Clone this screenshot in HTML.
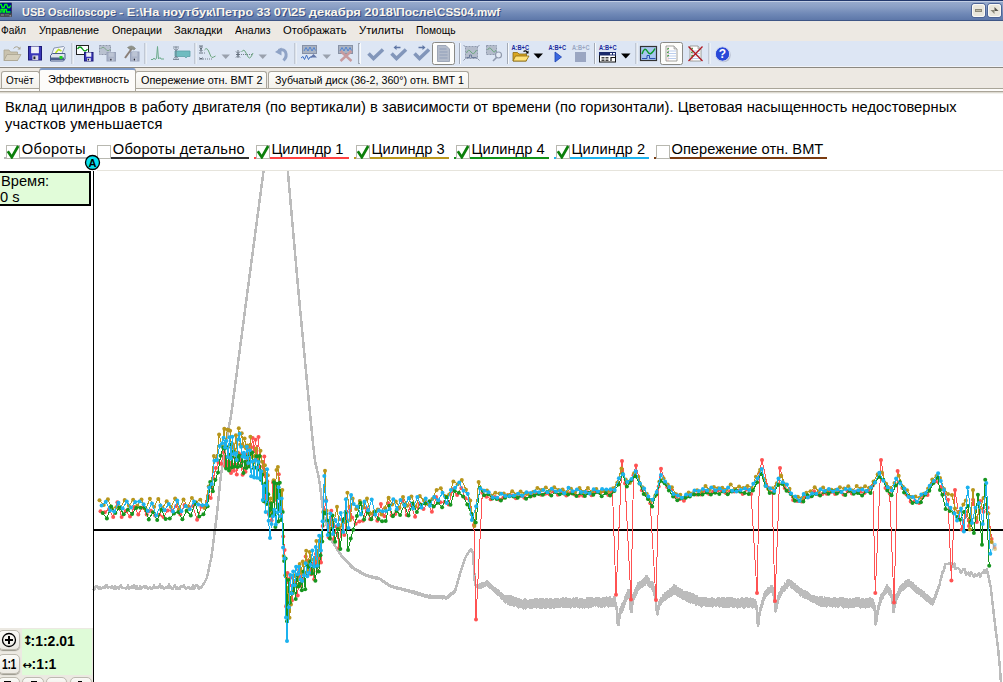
<!DOCTYPE html>
<html lang="ru"><head><meta charset="utf-8"><title>USB Oscilloscope</title>
<style>
html,body{margin:0;padding:0}
body{width:1003px;height:682px;overflow:hidden;position:relative;background:#fff;font-family:'Liberation Sans',sans-serif}
.abs{position:absolute}
.t{position:absolute;white-space:pre;transform-origin:0 0;line-height:1;z-index:5}
#title{left:0;top:0;width:1003px;height:21px;background:linear-gradient(#22386c 0,#22386c 1px,#c2cee4 1px,#c2cee4 2px,#97aacc 2px,#8a9fc5 7px,#6f88b6 14px,#5f79aa 19.5px,#415888 20px,#3d5484 21px)}
#menu{left:0;top:21px;width:1003px;height:20px;background:#ede9e3}

#tabs{left:0;top:68px;width:1003px;height:26px;background:#ede9e3}
.tab{position:absolute;top:3px;height:17px;background:linear-gradient(#fdfdfb,#f3f1eb);border:1px solid #a9a59b;border-bottom:none;border-radius:3px 3px 0 0;box-sizing:border-box}
.tab.sel{top:0px;height:23px;background:#fdfcfa;border-top:2px solid #7f9bc8;z-index:2}
#content{left:0;top:92px;width:1003px;height:590px}
.lbl{position:absolute;white-space:pre;font-size:14.67px;line-height:17px;color:#000}
.cb{position:absolute;width:12px;height:12px;border:1px solid #b8b8b0;background:#fff;box-sizing:content-box}
.ul{position:absolute;height:2px}
.chart{position:absolute;left:0;top:170px}
.btn{position:absolute;background:linear-gradient(#fafaf7,#eceae3);border:1px solid #bdbab0;border-radius:5px;box-shadow:0 1px 1px #9a978c;box-sizing:border-box}
</style></head><body>
<div id="title" class="abs">
<svg class="abs" style="left:0;top:2px" width="13" height="16" viewBox="0 2 13 16"><rect x="0" y="2.5" width="12" height="14.5" rx="0.8" fill="#4a4a50"/><rect x="0" y="3" width="11.3" height="10.3" fill="#000c90"/><path d="M0 4.500h1.200l1 3h1.800l1-3h1.800l1 3h1.800l1-2" fill="none" stroke="#00ff10" stroke-width="1.300"/><path d="M0 12h1v-2.500h2v2.500h1.500v-2.500h2v2.500h4" fill="none" stroke="#00ff10" stroke-width="1.300"/><path d="M1 15h3M5.500 14.800h1M7.500 14.800h1" stroke="#9a9aa0" stroke-width="0.900"/><rect x="9.500" y="15" width="1.500" height="1.500" fill="#8a8a90"/></svg>
<div class="abs" style="left:972px;top:4px;width:13px;height:13px;border-radius:3px;background:#e9e6dc;box-shadow:0 0 0 1px #4c6396,inset 0 0 0 1px #fbfaf6"><div class="abs" style="left:3px;top:5px;width:7px;height:3px;background:#bcb8a8;border:1px solid #8d8a7a;box-sizing:border-box"></div></div>
<div class="abs" style="left:988px;top:4px;width:13px;height:13px;border-radius:3px;background:#e9e6dc;box-shadow:0 0 0 1px #4c6396,inset 0 0 0 1px #fbfaf6"><svg class="abs" style="left:0;top:0" width="13" height="13"><path d="M6.5 3v4h4z" fill="#55524a"/><path d="M6.5 10v-4h-4z" fill="#8a8778"/></svg></div>
</div>
<div id="menu" class="abs"></div>
<svg id="tool" class="abs" width="1003" height="27" viewBox="0 41 1003 27" style="left:0;top:41px">
<rect x="0" y="41" width="1003" height="25" fill="#dde6f4"/>
<rect x="0" y="66" width="1003" height="1" fill="#eff2f8"/>
<rect x="0" y="67" width="1003" height="1" fill="#8b8880"/>
<rect x="71.5" y="43" width="1" height="21" fill="#a3aab6"/><rect x="72.5" y="43" width="1" height="21" fill="#f8fafc"/>
<rect x="144.5" y="43" width="1" height="21" fill="#a3aab6"/><rect x="145.5" y="43" width="1" height="21" fill="#f8fafc"/>
<rect x="194.5" y="43" width="1" height="21" fill="#a3aab6"/><rect x="195.5" y="43" width="1" height="21" fill="#f8fafc"/>
<rect x="294.5" y="43" width="1" height="21" fill="#a3aab6"/><rect x="295.5" y="43" width="1" height="21" fill="#f8fafc"/>
<rect x="459" y="43" width="1" height="21" fill="#a3aab6"/><rect x="460" y="43" width="1" height="21" fill="#f8fafc"/>
<rect x="507" y="43" width="1" height="21" fill="#a3aab6"/><rect x="508" y="43" width="1" height="21" fill="#f8fafc"/>
<rect x="594" y="43" width="1" height="21" fill="#a3aab6"/><rect x="595" y="43" width="1" height="21" fill="#f8fafc"/>
<rect x="635.5" y="43" width="1" height="21" fill="#a3aab6"/><rect x="636.5" y="43" width="1" height="21" fill="#f8fafc"/>
<rect x="708.5" y="43" width="1" height="21" fill="#a3aab6"/><rect x="709.5" y="43" width="1" height="21" fill="#f8fafc"/>
<rect x="358" y="43" width="1" height="21" fill="#a3aab6"/><rect x="359" y="43" width="1" height="1" fill="#a3aab6"/><rect x="359" y="63" width="1" height="1" fill="#a3aab6"/><rect x="360" y="43" width="1" height="21" fill="#f8fafc"/>
<g fill="#c9c2ae" stroke="#a9a390" stroke-width="0.8"><path d="M4 50h5l1.5 2h7v8.500h-13.500z"/><path d="M4 60.500l3-6h14l-3.500 6z" fill="#d5cfbd"/></g><path d="M13.500 48.500q3-3.500 6 0" fill="none" stroke="#a9a390" stroke-width="1"/><path d="M20.500 46.500v3h-3z" fill="#a9a390"/>
<rect x="28.5" y="46.5" width="13" height="13.5" fill="#3a37b8" stroke="#1c1a78" stroke-width="1"/>
<rect x="31.1" y="46.5" width="7.8" height="6.75" fill="#eef0f8"/>
<rect x="32.4" y="55.41" width="5.8500000000000005" height="4.590000000000001" fill="#d8d8e4"/>
<rect x="33.44" y="56.49" width="1.95" height="2.7" fill="#202030"/>
<path d="M54 48l9.500-1.500l1 1l-3 7h-10z" fill="#f4f6fa" stroke="#6f7f9f" stroke-width="0.8"/><path d="M55.500 53l3-3.500l3 1.500" fill="none" stroke="#b8e020" stroke-width="1.5"/>
<path d="M50.500 55.500l2-2h12.500v5.500l-1.500 2h-13z" fill="#dfe4ee" stroke="#4a5f8c" stroke-width="1"/><rect x="51" y="57.500" width="13" height="2.500" fill="#4a5f8c"/><rect x="59.500" y="56" width="3" height="3" fill="#22d022"/>
<rect x="76.500" y="45.500" width="12" height="9" fill="#fcfdff" stroke="#222" stroke-width="1"/><path d="M77.500 49q2.500-4 5 0t5 0" fill="none" stroke="#0a9a1a" stroke-width="1.4"/>
<rect x="84.5" y="52.5" width="8.5" height="8.5" fill="#3a37b8" stroke="#1c1a78" stroke-width="1"/>
<rect x="86.2" y="52.5" width="5.1" height="4.25" fill="#eef0f8"/>
<rect x="87.05" y="58.11" width="3.825" height="2.89" fill="#d8d8e4"/>
<rect x="87.73" y="58.79" width="1.275" height="1.7000000000000002" fill="#202030"/>
<rect x="99.500" y="45.500" width="11" height="9" fill="#b9c1d0" stroke="#8e97ab" stroke-width="1" stroke-dasharray="2 1"/><path d="M100.500 49q2.500-3.500 5 0t5 0" fill="none" stroke="#7da58a" stroke-width="1"/>
<rect x="107" y="52.5" width="8.5" height="8.5" fill="#aab3c8" stroke="#98a2ba" stroke-width="1"/>
<rect x="108.7" y="52.5" width="5.1" height="4.25" fill="#bcc4d4"/>
<rect x="109.55" y="58.11" width="3.825" height="2.89" fill="#bcc4d4"/>
<rect x="110.23" y="58.79" width="1.275" height="1.7000000000000002" fill="#202030"/>
<rect x="130.5" y="52" width="8.5" height="9" fill="#aab3c8" stroke="#98a2ba" stroke-width="1"/>
<rect x="132.2" y="52" width="5.1" height="4.5" fill="#bcc4d4"/>
<rect x="133.05" y="57.94" width="3.825" height="3.06" fill="#bcc4d4"/>
<rect x="133.73" y="58.66" width="1.275" height="1.8" fill="#202030"/>
<path d="M125 58l6.500-9" stroke="#8a7f78" stroke-width="2"/><path d="M127.500 47.500q4.500-3.500 8 1l-1.500 1.500q-2-1.500-4-0.500z" fill="#8f9188" stroke="#7b7d76" stroke-width="0.6"/>
<path d="M151 59.500h2l1-1.500l1 1.500l1.500-1l1 -12l1 12.500l1.500-1.500l1 1.500h3" fill="none" stroke="#6aaa8a" stroke-width="1"/>
<path d="M175 51h15v5.500h-3l-1 1.500l-1-1.500h-10z" fill="#6fbcc0" stroke="#5a9fa6" stroke-width="0.8"/><path d="M176 46.500v13M173.500 48.500l2.500 2l2.500-2M173.500 58.500l2.500-2l2.500 2M173 47h6M173 59.500h6" fill="none" stroke="#6a7686" stroke-width="0.8"/>
<path d="M201 46v6M199.500 47.500l1.500 1.500l1.500-1.500M199.500 51l1.500-1.500l1.500 1.500M199 46h4M199 53h4M199 59h4M199.500 57.500l1.500 1.500l1.500-1.500" fill="none" stroke="#5b6675" stroke-width="0.9"/><path d="M204 53h2M203 59h9" stroke="#5b6675" stroke-width="0.8" stroke-dasharray="1 1"/><path d="M204.500 50q2.500-3.500 4.500 2t3 5.500t3.500-1.500" fill="none" stroke="#6aa57e" stroke-width="1"/>
<path d="M221.500 54.500h8.500l-4.250 4.500z" fill="#9aa1ad"/>
<path d="M238 50v8M236 51.500l2 2l2-2M236 57.500l2-2l2 2M236 54.500h4" fill="none" stroke="#5b6675" stroke-width="0.9"/><path d="M241 54.500h12" stroke="#5b6675" stroke-width="0.8" stroke-dasharray="1 1"/><path d="M241.500 52q2.500-4 4.500 1t3.500 5t3.500-5" fill="none" stroke="#6aa57e" stroke-width="1"/>
<path d="M258.500 54.500h8.500l-4.250 4.500z" fill="#9aa1ad"/>
<path d="M283.500 60.500q4-4 2-8.500q-2-3.500-7-1.500" fill="none" stroke="#8fa3c6" stroke-width="3"/><path d="M275 52l6.500-4.500v8z" fill="#8fa3c6"/>
<rect x="302.500" y="45.500" width="14" height="8" fill="#a9b2c2" stroke="#8892a6" stroke-width="1"/><path d="M304 51l2-3.500l2 3.500l2-4l2 4l2-3.500l1.500 3" fill="none" stroke="#4a7fd0" stroke-width="0.9"/><path d="M301 58l2-1.500l1.500 3l2-4.500l2 4.500l1.500-2.500h2" fill="none" stroke="#3f6fc4" stroke-width="1"/><path d="M310 57.500l3.500-3.500l3.500 3.500z" fill="#6276a8"/>
<path d="M322.500 54.500h8.500l-4.250 4.500z" fill="#9aa1ad"/>
<rect x="338.500" y="45.500" width="14" height="8" fill="#a9b2c2" stroke="#8892a6" stroke-width="1"/><path d="M340 51l2-3.500l2 3.500l2-4l2 4l2-3.500l1.500 3" fill="none" stroke="#4a7fd0" stroke-width="0.9"/><path d="M340.500 51l11 10M351.500 51l-11 10" stroke="#c79a9e" stroke-width="2.4"/>
<path d="M368.5 53.500l5 5l9.500-9" fill="none" stroke="#8296ba" stroke-width="3.6" stroke-linejoin="miter"/>
<path d="M391.5 53.500l5 5l9.500-9" fill="none" stroke="#8296ba" stroke-width="3.6" stroke-linejoin="miter"/>
<path d="M393.500 47.500l3-2.500v1.700h4v1.600h-4v1.700z" fill="#5f76a4"/>
<path d="M414.5 53.500l5 5l9.500-9" fill="none" stroke="#8296ba" stroke-width="3.6" stroke-linejoin="miter"/>
<path d="M425.500 47.500l-3-2.500v1.700h-4v1.600h4v1.700z" fill="#5f76a4"/>
<rect x="432.500" y="42.500" width="22" height="22" rx="2" fill="#fdfdfb" stroke="#8a8a86" stroke-width="1"/>
<path d="M437.500 45.500h8.500l3.500 3.500v12.500h-12z" fill="#b4bccb" stroke="#8f99ad" stroke-width="0.8"/><path d="M439.500 49h7M439.500 52h8M439.500 55h8M439.500 58h8" stroke="#8d9bb8" stroke-width="0.9"/>
<rect x="465.500" y="46.500" width="12" height="12" fill="#b4bccb" stroke="#8f99ad" stroke-width="1" stroke-dasharray="2 1"/><path d="M466.500 53q2-5 4.500-1t5.500-2" fill="none" stroke="#6aa57e" stroke-width="1"/><path d="M466.500 57.500h3v-2.500h2v2.500h5" fill="none" stroke="#6b7c9c" stroke-width="1"/><path d="M463.500 45l2 2M479.500 45l-2 2M463.500 60.500l2-2M479.500 60.500l-2-2" stroke="#8f99ad" stroke-width="1"/>
<rect x="486.500" y="45.500" width="10" height="9" fill="#b4bccb" stroke="#8f99ad" stroke-width="1" stroke-dasharray="2 1"/><path d="M487.500 50q2-4 4.500 0t4 0" fill="none" stroke="#6aa57e" stroke-width="1"/><circle cx="498.500" cy="55" r="3" fill="#e6ecf6" stroke="#8f99ad" stroke-width="1.2"/><path d="M496.500 57.500l-3.500 3.500" stroke="#8f99ad" stroke-width="1.6"/>
<text x="511.5" y="49.800" font-family="Liberation Sans, sans-serif" font-weight="bold" font-size="7.500" textLength="17.500" lengthAdjust="spacingAndGlyphs" fill="#1a2a9c">A:B+C</text>
<text x="548.5" y="49.800" font-family="Liberation Sans, sans-serif" font-weight="bold" font-size="7.500" textLength="17.500" lengthAdjust="spacingAndGlyphs" fill="#1a2a9c">A:B+C</text>
<text x="572" y="49.800" font-family="Liberation Sans, sans-serif" font-weight="bold" font-size="7.500" textLength="17.500" lengthAdjust="spacingAndGlyphs" fill="#9aa6c2">A:B+C</text>
<text x="599" y="49.800" font-family="Liberation Sans, sans-serif" font-weight="bold" font-size="7.500" textLength="17.500" lengthAdjust="spacingAndGlyphs" fill="#1a2a9c">A:B+C</text>
<path d="M513 52.500h4.500l1.500 1.500h7.500v7h-13.500z" fill="#d9a520" stroke="#8a6a10" stroke-width="0.8"/><path d="M513 61l2.500-5h13.500l-3 5z" fill="#ffe27a" stroke="#8a6a10" stroke-width="0.8"/><path d="M523.500 51.500q2.500-1.500 4 1" fill="none" stroke="#000" stroke-width="1.2"/><path d="M528.500 50.500v3h-3z" fill="#000"/>
<path d="M533.500 53.500h9.500l-4.750 5z" fill="#000"/>
<path d="M555 52l6.500 5l-6.500 5z" fill="#3a68e0" stroke="#1a3fb0" stroke-width="0.8"/>
<rect x="575" y="52" width="11" height="10" fill="#9aa6c2"/>
<rect x="599.500" y="52.500" width="16" height="9.500" fill="#fff" stroke="#111" stroke-width="1"/><rect x="599" y="52" width="17" height="3.500" fill="#1a2a6c"/><rect x="601.500" y="57" width="3" height="1.500" fill="#444"/><rect x="601.500" y="59.500" width="3" height="1.500" fill="#444"/><rect x="605.500" y="57" width="3" height="1.500" fill="#444"/><rect x="605.500" y="59.500" width="3" height="1.500" fill="#444"/><path d="M611 61v-3.500h4" fill="none" stroke="#111" stroke-width="1.2"/><rect x="610" y="53" width="2" height="1.500" fill="#fff"/><rect x="613" y="53" width="2" height="1.500" fill="#fff"/>
<path d="M621 53.500h9.500l-4.750 5z" fill="#000"/>
<rect x="640.500" y="46.500" width="16" height="14" fill="#a8c6f0" stroke="#333" stroke-width="1.2"/><path d="M642 54q2.500-8 5.500-2.500t7.500-3" fill="none" stroke="#0a9a2a" stroke-width="1.5"/><path d="M642 58.500h5v-3h2.500v3h6" fill="none" stroke="#2850b0" stroke-width="1"/>
<rect x="660.500" y="42.500" width="22" height="22" rx="2" fill="#fdfdfb" stroke="#8a8a86" stroke-width="1"/>
<path d="M666 46h8l3 3v12h-11z" fill="#fff" stroke="#8a8a86" stroke-width="0.8"/><path d="M674 46v3h3" fill="#d8d8d8" stroke="#8a8a86" stroke-width="0.6"/>
<path d="M668 51h8M668 53.5h8M668 56h8M668 58.5h8" stroke="#a8c0e8" stroke-width="0.8"/>
<path d="M668 47v14" stroke="#e8a0a0" stroke-width="0.6"/>
<path d="M667.5 49.5l1-1.500M667.5 53l1-1.500M667.5 56.5l1-1.500" stroke="#0a8a1a" stroke-width="1.2"/>
<path d="M690 46h8l3 3v12h-11z" fill="#fff" stroke="#8a8a86" stroke-width="0.8"/><path d="M698 46v3h3" fill="#d8d8d8" stroke="#8a8a86" stroke-width="0.6"/>
<path d="M692 51h8M692 53.5h8M692 56h8M692 58.5h8" stroke="#a8c0e8" stroke-width="0.8"/>
<path d="M692 47v14" stroke="#e8a0a0" stroke-width="0.6"/>
<path d="M691.5 49.5l1-1.500M691.5 53l1-1.500M691.5 56.5l1-1.500" stroke="#0a8a1a" stroke-width="1.2"/>
<path d="M688.500 46.500l14 14.500M702.500 46.500l-14 14.500" stroke="#b01822" stroke-width="1.3"/>
<circle cx="723.500" cy="55" r="7.300" fill="#b8c0d0"/><circle cx="722.500" cy="54" r="7.200" fill="#2848d8" stroke="#d8e0f4" stroke-width="1"/><text x="722.500" y="58.300" text-anchor="middle" font-family="Liberation Sans, sans-serif" font-weight="bold" font-size="12" fill="#fff">?</text>
</svg>
<div id="tabs" class="abs">
<div class="abs" style="left:0;top:20px;width:1003px;height:1px;background:#a9a599"></div><div class="abs" style="left:0;top:21px;width:1003px;height:2px;background:#fdfcfa"></div><div class="abs" style="left:0;top:23px;width:1003px;height:1px;background:#aaa599"></div><div class="abs" style="left:0;top:24px;width:1003px;height:1px;background:#dddad1"></div><div class="abs" style="left:0;top:25px;width:1003px;height:1px;background:#f3f2ee"></div>
<div class="tab" style="left:1px;width:39px"></div>
<div class="tab" style="left:135px;width:132px"></div>
<div class="tab" style="left:268px;width:201px"></div>
<div class="tab sel" style="left:39px;width:97px"></div>
</div>
<div id="content" class="abs">
<div class="lbl" style="left:5px;top:7px;letter-spacing:0.044px">Вклад цилиндров в работу двигателя (по вертикали) в зависимости от времени (по горизонтали). Цветовая насыщенность недостоверных</div><div class="lbl" style="left:5px;top:24px;letter-spacing:0.17px">участков уменьшается</div>
<div class="ul" style="left:4px;top:65px;width:85px;background:#b4b4b4"></div>
<div class="cb" style="left:6px;top:53px"></div>
<svg class="abs" style="left:6px;top:52px" width="15" height="15"><path d="M1.800 7.300L5.800 13.200L12.200 2" fill="none" stroke="#0b7f0b" stroke-width="2.700"/></svg>
<div class="lbl" style="left:21.8px;top:49px;letter-spacing:0.42px">Обороты</div>
<div class="ul" style="left:111px;top:65px;width:138px;background:#303030"></div>
<div class="cb" style="left:97px;top:53px"></div>
<div class="lbl" style="left:112.8px;top:49px;letter-spacing:0.22px">Обороты детально</div>
<div class="ul" style="left:254px;top:65px;width:95px;background:#ff4040"></div>
<div class="cb" style="left:256px;top:53px"></div>
<svg class="abs" style="left:256px;top:52px" width="15" height="15"><path d="M1.800 7.300L5.800 13.200L12.200 2" fill="none" stroke="#0b7f0b" stroke-width="2.700"/></svg>
<div class="lbl" style="left:271.5px;top:49px;letter-spacing:-0.1px">Цилиндр 1</div>
<div class="ul" style="left:354px;top:65px;width:95px;background:#b8961c"></div>
<div class="cb" style="left:356px;top:53px"></div>
<svg class="abs" style="left:356px;top:52px" width="15" height="15"><path d="M1.800 7.300L5.800 13.200L12.200 2" fill="none" stroke="#0b7f0b" stroke-width="2.700"/></svg>
<div class="lbl" style="left:371.5px;top:49px;letter-spacing:0.05px">Цилиндр 3</div>
<div class="ul" style="left:454px;top:65px;width:95px;background:#109018"></div>
<div class="cb" style="left:456px;top:53px"></div>
<svg class="abs" style="left:456px;top:52px" width="15" height="15"><path d="M1.800 7.300L5.800 13.200L12.200 2" fill="none" stroke="#0b7f0b" stroke-width="2.700"/></svg>
<div class="lbl" style="left:471.5px;top:49px;letter-spacing:0.05px">Цилиндр 4</div>
<div class="ul" style="left:554px;top:65px;width:95px;background:#1cb2ee"></div>
<div class="cb" style="left:556px;top:53px"></div>
<svg class="abs" style="left:556px;top:52px" width="15" height="15"><path d="M1.800 7.300L5.800 13.200L12.200 2" fill="none" stroke="#0b7f0b" stroke-width="2.700"/></svg>
<div class="lbl" style="left:571.5px;top:49px;letter-spacing:0.1px">Цилиндр 2</div>
<div class="ul" style="left:654px;top:65px;width:173px;background:#7a3b10"></div>
<div class="cb" style="left:656px;top:53px"></div>
<div class="lbl" style="left:671.5px;top:49px;letter-spacing:0px">Опережение отн. ВМТ</div>
</div>
<svg class="chart" width="1003" height="512" viewBox="0 170 1003 512">
<polyline shape-rendering="crispEdges" fill="none" stroke="#bcbcbc" stroke-width="2.5" stroke-linejoin="round" points="93.0,590.4 94.0,589.3 95.0,588.8 96.0,586.0 97.0,586.3 98.0,587.6 99.0,588.6 100.0,587.1 101.0,588.8 102.0,587.9 103.0,587.3 104.0,587.7 105.0,587.5 106.0,584.8 107.0,585.7 108.0,587.8 109.0,587.3 110.0,587.2 111.0,587.9 112.0,585.7 113.0,587.7 114.0,588.4 115.0,585.7 116.0,588.7 117.0,587.7 118.0,587.4 119.0,588.5 120.0,586.1 121.0,585.4 122.0,588.2 123.0,587.7 124.0,588.2 125.0,588.0 126.0,588.8 127.0,588.3 128.0,585.2 129.0,588.9 130.0,587.7 131.0,588.3 132.0,586.2 133.0,587.5 134.0,585.0 135.0,587.0 136.0,588.7 137.0,586.2 138.0,588.7 139.0,588.7 140.0,586.4 141.0,588.7 142.0,587.5 143.0,587.1 144.0,586.1 145.0,587.6 146.0,586.3 147.0,588.2 148.0,588.4 149.0,588.2 150.0,587.3 151.0,588.5 152.0,588.6 153.0,587.9 154.0,585.5 155.0,587.7 156.0,587.4 157.0,587.8 158.0,587.4 159.0,586.6 160.0,584.5 161.0,587.5 162.0,586.6 163.0,587.4 164.0,588.9 165.0,588.0 166.0,587.6 167.0,587.0 168.0,587.5 169.0,584.2 170.0,587.4 171.0,587.2 172.0,588.9 173.0,588.4 174.0,586.5 175.0,584.9 176.0,588.5 177.0,587.1 178.0,588.9 179.0,588.6 180.0,588.5 181.0,586.0 182.0,587.2 183.0,586.9 184.0,585.3 185.0,588.0 186.0,588.9 187.0,587.8 188.0,587.1 189.0,587.2 190.0,588.7 191.0,588.0 192.0,588.6 193.0,585.4 194.0,588.5 195.0,588.0 196.0,584.9 197.0,584.8 198.0,587.9 199.0,588.8 200.0,587.5 201.0,588.0 202.5,585.6 204.0,583.2 205.5,580.7 207.0,577.4 208.5,570.4 210.0,563.4 211.5,556.4 213.0,545.5 214.5,533.6 216.0,521.7 217.5,508.7 219.0,493.8 220.5,479.0 222.0,467.9 223.5,458.7 225.0,449.5 226.5,440.3 228.0,431.1 229.5,423.8 231.0,416.2 232.5,404.9 234.0,393.5 235.5,382.2 237.0,370.9 238.5,359.5 240.0,348.2 241.5,336.9 243.0,325.5 244.5,314.2 246.0,302.8 247.5,291.5 249.0,280.2 250.5,269.0 252.0,257.7 253.5,246.5 255.0,235.2 256.5,224.0 258.0,212.7 259.5,201.5 261.0,190.2 262.5,179.0 264.0,167.7 265.5,160.0 267.0,160.0 268.5,160.0 270.0,160.0 271.5,160.0 273.0,160.0 274.5,160.0 276.0,160.0 277.5,160.0 279.0,160.0 280.5,160.0 282.0,160.0 283.5,160.0 285.0,160.0 286.5,160.0 288.0,173.4 289.5,190.4 291.0,207.4 292.5,224.3 294.0,241.3 295.5,258.3 297.0,275.3 298.5,292.1 300.0,308.0 301.5,323.8 303.0,339.7 304.5,355.5 306.0,371.4 307.5,387.2 309.0,403.1 310.5,418.9 312.0,433.5 313.5,448.0 315.0,461.3 316.5,467.6 318.0,473.8 319.5,482.0 321.0,493.9 322.5,505.8 324.0,516.0 325.5,521.5 327.0,527.0 328.5,531.2 330.0,535.0 331.0,537.7 331.5,540.1 332.0,540.7 332.5,542.2 333.0,542.1 333.5,543.7 334.0,543.8 334.5,545.3 335.0,545.4 335.5,546.7 336.0,546.7 336.5,548.4 337.0,548.4 337.5,550.0 338.0,549.9 338.5,551.6 339.0,551.4 339.5,552.9 340.0,553.1 340.5,554.5 341.0,554.6 341.5,556.1 342.0,556.2 342.5,557.4 343.0,557.3 343.5,558.6 344.0,558.2 344.5,559.5 345.0,559.2 345.5,560.7 346.0,560.3 346.5,561.7 347.0,561.3 347.5,562.7 348.0,562.4 348.5,563.6 349.0,563.4 349.5,564.7 350.0,564.6 350.5,565.9 351.0,565.6 351.5,566.8 352.0,566.5 352.5,567.9 353.0,567.6 353.5,568.7 354.0,568.2 354.5,569.4 355.0,568.9 355.5,569.9 356.0,569.4 356.5,570.4 357.0,569.9 357.5,571.0 358.0,570.5 358.5,571.7 359.0,571.0 359.5,572.2 360.0,571.6 360.5,572.8 361.0,572.3 361.5,573.4 362.0,572.9 362.5,574.0 363.0,573.4 363.5,574.7 364.0,574.0 364.5,575.2 365.0,574.5 365.5,575.5 366.0,574.8 366.5,575.9 367.0,575.0 367.5,576.0 368.0,575.5 368.5,576.3 369.0,575.8 369.5,576.5 370.0,576.0 370.5,576.9 371.0,576.1 371.5,577.3 372.0,576.5 372.5,577.5 373.0,576.7 373.5,577.6 374.0,576.9 374.5,578.1 375.0,577.3 375.5,578.4 376.0,577.5 376.5,578.5 377.0,577.6 377.5,578.9 378.0,578.1 378.5,579.0 379.0,578.3 379.5,579.2 380.0,578.7 380.5,579.7 381.0,579.2 381.5,580.3 382.0,580.0 382.5,581.2 383.0,580.8 383.5,581.8 384.0,581.3 384.5,582.6 385.0,582.2 385.5,583.4 386.0,582.7 386.5,584.1 387.0,583.6 387.5,584.6 388.0,584.3 388.5,585.5 389.0,584.9 389.5,586.0 390.0,585.6 390.5,586.7 391.0,585.7 391.5,586.8 392.0,586.2 392.5,587.2 393.0,586.3 393.5,587.4 394.0,586.7 394.5,587.5 395.0,586.8 395.5,587.9 396.0,587.3 396.5,588.3 397.0,587.4 397.5,588.5 398.0,587.8 398.5,588.8 399.0,588.0 399.5,589.1 400.0,588.2 400.5,589.2 401.0,588.4 401.5,589.7 402.0,588.7 402.5,589.7 403.0,588.9 403.5,590.0 404.0,589.3 404.5,590.3 405.0,589.5 405.5,590.6 406.0,589.7 406.5,590.9 407.0,589.7 407.5,591.2 408.0,590.0 408.5,591.4 409.0,590.4 409.5,591.6 410.0,590.7 410.5,591.9 411.0,590.7 411.5,592.5 412.0,591.3 412.5,592.8 413.0,591.2 413.5,592.9 414.0,591.5 414.5,593.3 415.0,592.0 415.5,593.8 416.0,592.3 416.5,593.9 417.0,592.5 417.5,594.5 418.0,592.9 418.5,594.7 419.0,593.0 419.5,594.9 420.0,593.5 420.5,595.0 421.0,593.9 421.5,595.2 422.0,594.2 422.5,595.8 423.0,594.4 423.5,595.8 424.0,594.8 424.5,596.4 425.0,594.7 425.5,596.6 426.0,595.3 426.5,596.7 427.0,595.6 427.5,597.1 428.0,595.9 428.5,597.3 429.0,595.9 429.5,597.6 430.0,595.6 430.5,597.4 431.0,596.1 431.5,597.7 432.0,596.1 432.5,597.5 433.0,596.3 433.5,597.5 434.0,596.1 434.5,597.7 435.0,596.3 435.5,597.7 436.0,596.5 436.5,597.7 437.0,596.5 437.5,597.8 438.0,596.6 438.5,597.7 439.0,596.5 439.5,597.8 440.0,596.5 440.5,598.1 441.0,596.4 441.5,598.2 442.0,596.5 442.5,598.4 443.0,596.8 443.5,598.1 444.0,596.5 444.5,598.1 445.0,596.7 445.5,598.4 446.0,597.1 446.5,598.6 447.0,596.8 447.5,598.1 448.0,596.0 448.5,597.3 449.0,595.5 449.5,596.4 450.0,594.4 450.5,595.7 451.0,593.4 451.5,594.8 452.0,592.7 452.5,594.0 453.0,591.8 453.5,593.1 454.0,591.2 454.5,591.9 455.0,590.4 455.5,589.9 456.0,587.1 456.5,586.5 457.0,583.6 457.5,582.8 458.0,580.3 458.5,579.3 459.0,576.9 459.5,575.7 460.0,573.4 460.5,572.4 461.0,570.2 461.5,569.4 462.0,567.3 462.5,566.4 463.0,564.4 463.5,563.5 464.0,561.6 464.5,560.6 465.0,558.6 465.5,557.7 466.0,555.7 466.5,555.7 467.0,554.3 467.5,554.2 468.0,552.9 468.5,552.8 469.0,551.4 469.5,551.4 470.0,550.1 470.5,549.9 471.0,548.8 471.5,550.3 472.0,550.7 472.5,552.3 473.0,552.7 473.5,561.2 474.0,568.8 474.5,577.3 475.0,584.7 475.5,585.6 476.0,585.2 476.5,586.3 477.0,585.4 477.5,587.3 478.0,585.6 478.5,588.0 479.0,584.9 479.5,587.7 480.0,584.3 480.5,588.0 481.0,584.8 481.5,587.1 482.0,583.5 482.5,587.2 483.0,583.4 483.5,586.0 484.0,583.1 484.5,586.2 485.0,582.7 485.5,585.4 486.0,582.3 486.5,584.9 487.0,580.9 487.5,584.7 488.0,581.9 488.5,586.0 489.0,582.7 489.5,587.1 490.0,584.3 490.5,588.2 491.0,584.8 491.5,588.1 492.0,586.2 492.5,589.5 493.0,586.6 493.5,590.2 494.0,587.8 494.5,591.1 495.0,588.5 495.5,592.6 496.0,589.7 496.5,593.4 497.0,589.6 497.5,593.6 498.0,590.4 498.5,595.2 499.0,591.3 499.5,595.6 500.0,592.8 500.5,596.7 501.0,592.8 501.5,598.0 502.0,594.3 502.5,598.8 503.0,595.2 503.5,599.3 504.0,596.2 504.5,601.6 505.0,596.4 505.5,602.3 506.0,596.7 506.5,601.6 507.0,596.4 507.5,602.0 508.0,596.9 508.5,604.1 509.0,596.0 509.5,604.3 510.0,596.7 510.5,605.0 511.0,596.3 511.5,604.5 512.0,597.2 512.5,603.8 513.0,597.5 513.5,605.0 514.0,597.8 514.5,605.8 515.0,599.3 515.5,604.8 516.0,598.1 516.5,605.4 517.0,599.5 517.5,606.2 518.0,600.3 518.5,607.5 519.0,599.1 519.5,606.7 520.0,600.2 520.5,607.0 521.0,600.4 521.5,607.2 522.0,601.3 522.5,606.6 523.0,601.1 523.5,608.3 524.0,600.5 524.5,606.7 525.0,599.5 525.5,608.5 526.0,600.5 526.5,606.5 527.0,601.1 527.5,606.4 528.0,600.7 528.5,606.3 529.0,600.9 529.5,606.7 530.0,600.1 530.5,608.2 531.0,599.7 531.5,607.0 532.0,600.5 532.5,607.3 533.0,600.5 533.5,606.8 534.0,601.2 534.5,606.7 535.0,599.1 535.5,606.3 536.0,600.2 536.5,607.4 537.0,599.3 537.5,606.5 538.0,600.7 538.5,606.5 539.0,600.3 539.5,607.0 540.0,599.0 540.5,607.9 541.0,599.2 541.5,605.9 542.0,601.1 542.5,607.5 543.0,599.1 543.5,606.9 544.0,599.8 544.5,605.8 545.0,600.2 545.5,608.0 546.0,599.2 546.5,607.8 547.0,598.8 547.5,606.3 548.0,600.8 548.5,606.1 549.0,599.8 549.5,607.3 550.0,598.8 550.5,607.4 551.0,599.5 551.5,607.5 552.0,599.9 552.5,606.9 553.0,600.9 553.5,607.5 554.0,600.4 554.5,607.8 555.0,599.4 555.5,606.3 556.0,600.6 556.5,606.2 557.0,599.4 557.5,607.2 558.0,600.6 558.5,605.7 559.0,599.6 559.5,606.9 560.0,599.9 560.5,606.0 561.0,599.4 561.5,605.5 562.0,600.1 562.5,606.5 563.0,598.5 563.5,607.0 564.0,598.6 564.5,606.5 565.0,600.1 565.5,606.0 566.0,598.4 566.5,607.0 567.0,599.9 567.5,605.4 568.0,599.5 568.5,606.9 569.0,599.6 569.5,605.9 570.0,599.0 570.5,607.5 571.0,600.0 571.5,605.4 572.0,599.7 572.5,606.2 573.0,598.9 573.5,605.7 574.0,598.6 574.5,607.0 575.0,599.3 575.5,605.7 576.0,598.2 576.5,605.9 577.0,598.5 577.5,605.7 578.0,599.9 578.5,606.9 579.0,599.7 579.5,607.4 580.0,599.2 580.5,605.5 581.0,599.8 581.5,606.1 582.0,598.7 582.5,607.3 583.0,600.0 583.5,606.0 584.0,599.8 584.5,607.3 585.0,599.9 585.5,605.1 586.0,600.1 586.5,605.9 587.0,598.1 587.5,607.1 588.0,598.5 588.5,607.3 589.0,598.0 589.5,605.7 590.0,599.7 590.5,607.1 591.0,598.4 591.5,604.9 592.0,598.5 592.5,605.8 593.0,599.2 593.5,605.6 594.0,599.7 594.5,604.8 595.0,599.4 595.5,605.6 596.0,597.7 596.5,605.1 597.0,597.7 597.5,605.2 598.0,599.1 598.5,606.7 599.0,598.0 599.5,605.7 600.0,599.8 600.5,605.8 601.0,599.0 601.5,606.9 602.0,599.4 602.5,605.5 603.0,597.7 603.5,604.7 604.0,598.9 604.5,606.6 605.0,598.0 605.5,604.7 606.0,599.7 606.5,604.7 607.0,597.6 607.5,605.2 608.0,598.0 608.5,606.7 609.0,598.9 609.5,605.2 610.0,597.4 610.5,606.0 611.0,599.1 611.5,606.2 612.0,598.9 612.5,605.1 613.0,599.6 613.5,606.2 614.0,597.4 614.5,605.6 615.0,598.1 615.5,605.2 616.0,602.7 616.5,608.1 617.0,610.6 617.5,622.6 618.0,625.1 618.5,625.1 619.0,617.3 619.5,618.1 620.0,608.8 620.5,613.0 621.0,606.8 621.5,612.2 622.0,604.5 622.5,610.4 623.0,603.0 623.5,607.2 624.0,600.8 624.5,604.5 625.0,597.2 625.5,601.2 626.0,595.6 626.5,599.8 627.0,592.7 627.5,595.7 628.0,590.4 628.5,593.9 629.0,590.2 629.5,598.1 630.0,592.5 630.5,608.7 631.0,611.6 631.5,612.0 632.0,603.9 632.5,604.8 633.0,594.8 633.5,599.6 634.0,593.5 634.5,597.3 635.0,590.6 635.5,595.6 636.0,588.1 636.5,593.7 637.0,586.1 637.5,590.2 638.0,583.6 638.5,589.0 639.0,583.2 639.5,588.2 640.0,582.0 640.5,587.0 641.0,582.0 641.5,586.2 642.0,581.3 642.5,586.5 643.0,579.7 643.5,584.6 644.0,579.1 644.5,584.9 645.0,578.0 645.5,582.7 646.0,576.6 646.5,582.5 647.0,576.4 647.5,582.7 648.0,578.5 648.5,585.1 649.0,579.0 649.5,586.5 650.0,581.6 650.5,586.5 651.0,582.6 651.5,587.4 652.0,582.2 652.5,589.3 653.0,583.5 653.5,591.3 654.0,587.2 654.5,595.0 655.0,591.9 655.5,599.2 656.0,598.5 656.5,610.0 657.0,611.1 657.5,614.4 658.0,606.8 658.5,609.0 659.0,601.9 659.5,605.5 660.0,600.4 660.5,604.8 661.0,598.3 661.5,602.7 662.0,598.0 662.5,601.6 663.0,595.5 663.5,600.2 664.0,595.3 664.5,599.4 665.0,593.4 665.5,599.3 666.0,593.9 666.5,597.6 667.0,592.3 667.5,597.7 668.0,590.8 668.5,596.0 669.0,590.9 669.5,596.5 670.0,589.4 670.5,594.9 671.0,588.7 671.5,595.6 672.0,587.7 672.5,593.9 673.0,586.7 673.5,592.7 674.0,584.7 674.5,593.9 675.0,586.5 675.5,592.7 676.0,586.2 676.5,593.3 677.0,588.5 677.5,595.5 678.0,588.1 678.5,595.9 679.0,588.8 679.5,596.6 680.0,589.2 680.5,595.6 681.0,590.9 681.5,597.1 682.0,590.0 682.5,598.5 683.0,591.9 683.5,598.5 684.0,591.8 684.5,598.7 685.0,592.8 685.5,598.6 686.0,592.4 686.5,600.6 687.0,593.7 687.5,600.0 688.0,592.6 688.5,601.5 689.0,594.4 689.5,600.0 690.0,593.1 690.5,602.4 691.0,594.6 691.5,600.7 692.0,594.0 692.5,601.9 693.0,594.5 693.5,602.9 694.0,595.1 694.5,602.3 695.0,595.7 695.5,602.9 696.0,597.0 696.5,604.8 697.0,596.4 697.5,603.7 698.0,598.3 698.5,604.6 699.0,598.0 699.5,605.0 700.0,599.4 700.5,604.9 701.0,598.0 701.5,606.5 702.0,599.6 702.5,605.7 703.0,597.9 703.5,604.5 704.0,597.8 704.5,604.7 705.0,598.3 705.5,605.7 706.0,598.3 706.5,605.2 707.0,598.8 707.5,605.8 708.0,598.8 708.5,606.0 709.0,598.8 709.5,605.5 710.0,599.8 710.5,606.0 711.0,598.7 711.5,605.1 712.0,598.1 712.5,606.4 713.0,598.8 713.5,605.0 714.0,598.8 714.5,604.9 715.0,599.6 715.5,605.6 716.0,599.7 716.5,605.7 717.0,598.8 717.5,604.8 718.0,598.5 718.5,604.9 719.0,598.3 719.5,606.5 720.0,598.8 720.5,604.9 721.0,598.8 721.5,605.6 722.0,597.8 722.5,605.1 723.0,598.0 723.5,607.1 724.0,598.3 724.5,606.7 725.0,599.6 725.5,607.1 726.0,598.9 726.5,607.1 727.0,598.0 727.5,605.3 728.0,598.3 728.5,607.1 729.0,600.0 729.5,605.7 730.0,598.4 730.5,605.3 731.0,598.1 731.5,605.6 732.0,598.3 732.5,605.3 733.0,599.0 733.5,607.2 734.0,599.7 734.5,605.6 735.0,599.1 735.5,605.8 736.0,600.2 736.5,605.5 737.0,599.9 737.5,607.3 738.0,598.7 738.5,607.2 739.0,599.9 739.5,607.0 740.0,600.1 740.5,606.4 741.0,598.8 741.5,606.0 742.0,598.3 742.5,606.5 743.0,599.0 743.5,607.3 744.0,600.2 744.5,607.6 745.0,598.9 745.5,606.2 746.0,598.5 746.5,605.9 747.0,598.1 747.5,606.6 748.0,599.6 748.5,607.1 749.0,599.4 749.5,605.7 750.0,598.7 750.5,605.4 751.0,598.6 751.5,605.9 752.0,599.0 752.5,607.7 753.0,599.2 753.5,607.0 754.0,599.8 754.5,605.4 755.0,600.5 755.5,606.4 756.0,602.1 756.5,608.2 757.0,611.1 757.5,622.4 758.0,625.5 758.5,624.4 759.0,616.2 759.5,615.7 760.0,608.5 760.5,610.4 761.0,605.1 761.5,607.3 762.0,601.6 762.5,604.5 763.0,597.9 763.5,600.7 764.0,594.6 764.5,598.0 765.0,592.2 765.5,596.7 766.0,591.1 766.5,594.5 767.0,590.4 767.5,594.3 768.0,588.2 768.5,593.6 769.0,588.0 769.5,591.9 770.0,587.8 770.5,591.6 771.0,585.9 771.5,590.2 772.0,586.5 772.5,592.7 773.0,588.5 773.5,595.6 774.0,592.0 774.5,602.1 775.0,602.3 775.5,611.5 776.0,607.0 776.5,608.5 777.0,601.9 777.5,603.7 778.0,596.3 778.5,599.5 779.0,592.8 779.5,596.9 780.0,592.0 780.5,595.6 781.0,589.5 781.5,593.7 782.0,587.0 782.5,591.4 783.0,586.7 783.5,590.4 784.0,586.0 784.5,590.3 785.0,583.6 785.5,588.8 786.0,583.8 786.5,587.9 787.0,581.4 787.5,586.1 788.0,580.3 788.5,585.0 789.0,580.0 789.5,584.3 790.0,580.8 790.5,585.0 791.0,581.5 791.5,587.1 792.0,581.8 792.5,588.1 793.0,582.6 793.5,588.0 794.0,583.8 794.5,589.2 795.0,584.2 795.5,590.2 796.0,586.0 796.5,591.3 797.0,585.7 797.5,591.4 798.0,586.7 798.5,592.0 799.0,588.6 799.5,593.2 800.0,588.6 800.5,595.3 801.0,589.3 801.5,594.7 802.0,589.6 802.5,595.3 803.0,591.2 803.5,596.8 804.0,591.1 804.5,596.9 805.0,591.5 805.5,597.9 806.0,592.4 806.5,598.2 807.0,592.5 807.5,598.7 808.0,593.4 808.5,599.0 809.0,593.7 809.5,598.9 810.0,594.8 810.5,599.9 811.0,595.6 811.5,600.9 812.0,596.0 812.5,600.0 813.0,596.5 813.5,602.1 814.0,596.5 814.5,601.3 815.0,597.5 815.5,601.7 816.0,596.7 816.5,603.5 817.0,597.1 817.5,604.1 818.0,598.5 818.5,604.1 819.0,597.9 819.5,604.8 820.0,597.0 820.5,605.3 821.0,598.8 821.5,605.5 822.0,596.9 822.5,605.9 823.0,599.0 823.5,604.4 824.0,599.1 824.5,604.1 825.0,597.6 825.5,606.1 826.0,598.2 826.5,606.3 827.0,598.4 827.5,605.2 828.0,599.8 828.5,605.0 829.0,598.4 829.5,605.3 830.0,599.5 830.5,605.8 831.0,600.2 831.5,605.4 832.0,599.6 832.5,606.5 833.0,599.4 833.5,605.6 834.0,598.0 834.5,606.1 835.0,598.3 835.5,606.3 836.0,600.2 836.5,605.9 837.0,599.2 837.5,606.7 838.0,599.5 838.5,606.6 839.0,599.0 839.5,605.5 840.0,598.3 840.5,605.2 841.0,598.4 841.5,605.4 842.0,600.3 842.5,605.5 843.0,598.5 843.5,607.3 844.0,600.3 844.5,606.2 845.0,599.2 845.5,606.9 846.0,599.9 846.5,606.2 847.0,599.5 847.5,607.0 848.0,599.8 848.5,607.3 849.0,599.7 849.5,605.6 850.0,598.7 850.5,606.3 851.0,600.1 851.5,606.6 852.0,600.2 852.5,607.0 853.0,598.8 853.5,607.0 854.0,598.9 854.5,606.0 855.0,599.5 855.5,606.1 856.0,598.3 856.5,605.4 857.0,598.3 857.5,605.3 858.0,600.0 858.5,605.8 859.0,598.3 859.5,606.4 860.0,599.6 860.5,607.3 861.0,599.9 861.5,606.3 862.0,599.2 862.5,607.1 863.0,598.7 863.5,606.8 864.0,599.7 864.5,606.1 865.0,600.2 865.5,607.3 866.0,599.0 866.5,607.1 867.0,600.1 867.5,606.4 868.0,598.7 868.5,606.7 869.0,600.3 869.5,606.5 870.0,598.5 870.5,605.9 871.0,600.1 871.5,606.1 872.0,598.9 872.5,607.4 873.0,600.2 873.5,606.4 874.0,602.7 874.5,608.0 875.0,612.6 875.5,624.6 876.0,622.3 876.5,621.7 877.0,613.3 877.5,614.5 878.0,606.4 878.5,609.3 879.0,603.0 879.5,605.2 880.0,598.2 880.5,602.5 881.0,595.2 881.5,599.5 882.0,594.4 882.5,598.1 883.0,592.9 883.5,595.8 884.0,590.8 884.5,593.8 885.0,589.1 885.5,593.4 886.0,587.0 886.5,591.2 887.0,585.4 887.5,591.0 888.0,587.5 888.5,592.6 889.0,588.4 889.5,594.1 890.0,588.9 890.5,595.0 891.0,590.8 891.5,596.8 892.0,595.5 892.5,603.5 893.0,602.5 893.5,612.0 894.0,604.0 894.5,607.3 895.0,599.4 895.5,602.9 896.0,595.4 896.5,599.2 897.0,593.7 897.5,597.4 898.0,591.9 898.5,594.9 899.0,588.7 899.5,593.2 900.0,587.1 900.5,591.2 901.0,586.5 901.5,590.6 902.0,585.2 902.5,589.6 903.0,584.1 903.5,589.4 904.0,584.0 904.5,588.0 905.0,582.0 905.5,586.6 906.0,581.5 906.5,586.6 907.0,581.3 907.5,585.0 908.0,580.1 908.5,585.3 909.0,579.7 909.5,585.7 910.0,581.9 910.5,586.6 911.0,582.0 911.5,587.7 912.0,582.9 912.5,588.4 913.0,583.2 913.5,589.0 914.0,584.7 914.5,590.5 915.0,585.9 915.5,590.9 916.0,586.4 916.5,591.9 917.0,587.7 917.5,593.1 918.0,588.2 918.5,592.4 919.0,589.1 919.5,593.8 920.0,590.4 920.5,594.7 921.0,590.5 921.5,595.9 922.0,591.5 922.5,596.0 923.0,592.5 923.5,597.6 924.0,592.1 924.5,598.1 925.0,594.1 925.5,599.3 926.0,594.6 926.5,599.2 927.0,595.8 927.5,600.9 928.0,595.6 928.5,601.5 929.0,596.9 929.5,602.2 930.0,598.1 930.5,603.5 931.0,598.9 931.5,603.7 932.0,599.1 932.5,604.5 933.0,600.6 933.5,602.7 934.0,597.9 934.5,599.7 935.0,595.0 935.5,597.0 936.0,592.4 936.5,594.1 937.0,590.3 937.5,591.2 938.0,587.6 938.5,588.3 939.0,585.2 939.5,585.6 940.0,582.0 941.3,577.5 942.6,571.9 943.9,570.4 945.2,564.4 946.5,564.0 947.8,564.1 949.1,563.6 950.4,563.2 951.7,564.2 953.0,566.5 954.3,563.7 955.6,569.0 956.9,568.3 958.2,568.2 959.5,569.6 960.8,572.8 962.1,571.0 963.4,568.9 964.7,569.3 966.0,574.5 967.3,573.2 968.6,572.6 969.9,575.8 971.2,572.3 972.5,574.5 973.8,576.5 975.1,574.0 976.4,576.2 977.7,575.4 979.0,572.7 980.3,576.9 981.6,573.1 982.9,573.1 984.2,570.5 985.5,572.9 986.8,569.2 988.1,574.0 989.4,581.0 990.7,586.9 992.2,600.1 993.7,613.3 995.2,626.1 996.7,637.9 998.2,649.7 999.7,665.5 1001.2,685.9"/>
<rect x="93" y="529" width="910" height="2" fill="#000"/>
<g stroke="#ff5252" fill="#ff5252">
<polyline shape-rendering="crispEdges" fill="none" stroke-width="1" points="100.5,511.2 104.8,512.2 109.0,509.2 113.2,517.1 117.4,502.3 121.6,516.9 125.8,511.0 130.0,516.5 134.2,506.9 138.3,514.5 142.5,507.5 146.7,514.4 150.9,510.7 155.1,515.4 159.3,514.8 163.5,517.1 167.7,510.4 171.9,510.7 176.1,505.9 180.3,514.6 184.5,505.0 188.7,506.5 192.9,506.0 197.1,519.8 201.3,506.7 205.5,506.3 208.1,495.5 210.7,497.9 213.3,478.3 215.9,468.0 218.5,462.5 221.1,463.8 223.7,452.3 225.2,466.2 226.6,457.1 228.1,466.1 229.5,454.8 231.0,473.1 232.4,457.3 233.9,470.8 235.3,453.1 236.8,474.6 238.2,452.9 239.7,454.3 241.1,464.8 242.6,474.8 244.0,468.5 245.5,471.7 246.9,454.7 248.4,465.6 249.8,447.7 251.3,447.3 252.7,438.1 254.2,451.2 255.6,439.8 257.1,459.8 258.5,437.0 260.0,466.5 261.4,471.2 262.9,472.5 264.3,456.5 265.8,502.2 267.2,481.2 268.7,513.7 270.1,502.3 271.6,520.2 273.0,482.5 274.5,500.1 275.9,488.4 277.4,504.1 278.8,474.2 280.3,492.9 281.7,509.4 283.2,536.5 284.6,550.1 286.1,606.6 287.5,573.1 289.0,598.2 290.4,577.8 291.9,600.6 293.3,585.7 294.8,582.3 296.2,584.7 297.7,595.5 299.1,569.8 300.6,585.8 302.3,573.0 304.0,580.4 305.7,556.4 307.4,560.8 309.1,561.0 310.8,574.2 312.5,564.1 314.2,579.2 315.9,554.0 317.6,571.4 319.3,558.0 321.0,562.4 322.7,526.1 324.4,510.0 326.1,500.2 328.7,537.3 331.3,510.8 333.9,539.0 336.5,526.4 339.1,548.1 341.7,519.6 344.3,535.0 346.9,511.9 349.5,506.8 352.1,517.4 355.7,523.7 359.3,521.6 362.9,520.7 366.5,508.1 370.1,519.2 373.7,512.8 377.3,520.8 380.9,503.9 384.5,516.3 388.1,502.9 391.7,515.2 395.3,513.9 398.9,508.5 402.5,500.8 406.7,515.0 410.9,505.1 415.1,516.7 419.3,503.5 423.5,508.9 427.7,502.8 431.9,511.7 436.1,497.0 440.3,502.2 444.5,502.1 448.7,504.4 452.9,489.3 457.1,495.1 461.3,487.9 465.5,498.3 469.7,500.4 473.9,525.0 476.0,619.5 482.3,492.8 486.5,496.7 490.7,499.2 494.9,496.9 499.1,499.5 503.3,497.7 507.5,495.3 511.7,495.5 515.9,498.3 520.1,495.9 524.3,497.7 528.5,493.4 532.7,495.5 536.9,493.0 541.1,494.7 545.3,493.8 549.5,494.2 553.7,491.5 557.9,494.8 562.1,492.6 566.3,495.5 570.5,492.9 574.7,494.4 578.9,495.7 583.1,495.7 587.3,492.3 591.5,495.2 595.7,492.3 599.9,493.1 604.1,491.3 608.3,495.0 612.5,491.4 616.0,594.7 622.0,461.0 625.1,483.6 631.0,599.6 633.5,475.2 636.0,465.6 641.9,490.3 646.1,495.0 650.3,503.3 656.0,600.0 658.7,486.4 661.0,468.7 667.1,487.1 671.3,489.5 675.5,496.7 679.7,499.2 683.9,500.8 688.1,495.7 692.3,494.2 696.5,494.6 700.7,494.6 704.9,490.8 709.1,494.0 713.3,491.4 717.5,490.5 721.7,491.2 725.9,493.0 730.1,491.3 734.3,491.6 738.5,490.8 742.7,493.9 746.9,489.6 751.1,493.9 757.0,593.0 759.5,472.7 762.0,460.0 767.9,487.5 772.1,492.6 775.0,601.0 780.0,468.0 784.7,487.9 788.9,491.3 793.1,500.1 797.3,501.1 801.5,501.4 805.7,497.0 809.9,496.5 814.1,491.3 818.3,494.4 822.5,494.0 826.7,493.7 830.9,492.0 835.1,494.1 839.3,491.4 843.5,494.6 847.7,491.6 851.9,493.5 856.1,491.6 860.3,491.7 864.5,493.1 868.7,489.9 872.9,485.4 875.3,593.0 881.0,460.0 885.5,488.0 889.7,493.6 894.0,602.6 897.6,471.0 902.3,487.9 906.5,494.6 910.7,501.5 914.9,501.0 919.1,503.1 923.3,495.9 927.5,495.0 931.7,484.1 935.9,481.3 941.0,487.0 944.5,494.0 948.0,499.7 951.4,580.6 955.0,490.0 958.4,512.0 961.8,529.5 965.4,512.0 969.0,526.0 973.0,499.7 976.8,522.0 980.3,501.0 983.5,511.8 987.6,507.7 991.6,539.0"/>
<g stroke="none"><circle cx="100.5" cy="511.2" r="2"/><circle cx="104.8" cy="512.2" r="2"/><circle cx="109.0" cy="509.2" r="2"/><circle cx="113.2" cy="517.1" r="2"/><circle cx="117.4" cy="502.3" r="2"/><circle cx="121.6" cy="516.9" r="2"/><circle cx="125.8" cy="511.0" r="2"/><circle cx="130.0" cy="516.5" r="2"/><circle cx="134.2" cy="506.9" r="2"/><circle cx="138.3" cy="514.5" r="2"/><circle cx="142.5" cy="507.5" r="2"/><circle cx="146.7" cy="514.4" r="2"/><circle cx="150.9" cy="510.7" r="2"/><circle cx="155.1" cy="515.4" r="2"/><circle cx="159.3" cy="514.8" r="2"/><circle cx="163.5" cy="517.1" r="2"/><circle cx="167.7" cy="510.4" r="2"/><circle cx="171.9" cy="510.7" r="2"/><circle cx="176.1" cy="505.9" r="2"/><circle cx="180.3" cy="514.6" r="2"/><circle cx="184.5" cy="505.0" r="2"/><circle cx="188.7" cy="506.5" r="2"/><circle cx="192.9" cy="506.0" r="2"/><circle cx="197.1" cy="519.8" r="2"/><circle cx="201.3" cy="506.7" r="2"/><circle cx="205.5" cy="506.3" r="2"/><circle cx="208.1" cy="495.5" r="2"/><circle cx="210.7" cy="497.9" r="2"/><circle cx="213.3" cy="478.3" r="2"/><circle cx="215.9" cy="468.0" r="2"/><circle cx="218.5" cy="462.5" r="2"/><circle cx="221.1" cy="463.8" r="2"/><circle cx="223.7" cy="452.3" r="2"/><circle cx="225.2" cy="466.2" r="2"/><circle cx="226.6" cy="457.1" r="2"/><circle cx="228.1" cy="466.1" r="2"/><circle cx="229.5" cy="454.8" r="2"/><circle cx="231.0" cy="473.1" r="2"/><circle cx="232.4" cy="457.3" r="2"/><circle cx="233.9" cy="470.8" r="2"/><circle cx="235.3" cy="453.1" r="2"/><circle cx="236.8" cy="474.6" r="2"/><circle cx="238.2" cy="452.9" r="2"/><circle cx="239.7" cy="454.3" r="2"/><circle cx="241.1" cy="464.8" r="2"/><circle cx="242.6" cy="474.8" r="2"/><circle cx="244.0" cy="468.5" r="2"/><circle cx="245.5" cy="471.7" r="2"/><circle cx="246.9" cy="454.7" r="2"/><circle cx="248.4" cy="465.6" r="2"/><circle cx="249.8" cy="447.7" r="2"/><circle cx="251.3" cy="447.3" r="2"/><circle cx="252.7" cy="438.1" r="2"/><circle cx="254.2" cy="451.2" r="2"/><circle cx="255.6" cy="439.8" r="2"/><circle cx="257.1" cy="459.8" r="2"/><circle cx="258.5" cy="437.0" r="2"/><circle cx="260.0" cy="466.5" r="2"/><circle cx="261.4" cy="471.2" r="2"/><circle cx="262.9" cy="472.5" r="2"/><circle cx="264.3" cy="456.5" r="2"/><circle cx="265.8" cy="502.2" r="2"/><circle cx="267.2" cy="481.2" r="2"/><circle cx="268.7" cy="513.7" r="2"/><circle cx="270.1" cy="502.3" r="2"/><circle cx="271.6" cy="520.2" r="2"/><circle cx="273.0" cy="482.5" r="2"/><circle cx="274.5" cy="500.1" r="2"/><circle cx="275.9" cy="488.4" r="2"/><circle cx="277.4" cy="504.1" r="2"/><circle cx="278.8" cy="474.2" r="2"/><circle cx="280.3" cy="492.9" r="2"/><circle cx="281.7" cy="509.4" r="2"/><circle cx="283.2" cy="536.5" r="2"/><circle cx="284.6" cy="550.1" r="2"/><circle cx="286.1" cy="606.6" r="2"/><circle cx="287.5" cy="573.1" r="2"/><circle cx="289.0" cy="598.2" r="2"/><circle cx="290.4" cy="577.8" r="2"/><circle cx="291.9" cy="600.6" r="2"/><circle cx="293.3" cy="585.7" r="2"/><circle cx="294.8" cy="582.3" r="2"/><circle cx="296.2" cy="584.7" r="2"/><circle cx="297.7" cy="595.5" r="2"/><circle cx="299.1" cy="569.8" r="2"/><circle cx="300.6" cy="585.8" r="2"/><circle cx="302.3" cy="573.0" r="2"/><circle cx="304.0" cy="580.4" r="2"/><circle cx="305.7" cy="556.4" r="2"/><circle cx="307.4" cy="560.8" r="2"/><circle cx="309.1" cy="561.0" r="2"/><circle cx="310.8" cy="574.2" r="2"/><circle cx="312.5" cy="564.1" r="2"/><circle cx="314.2" cy="579.2" r="2"/><circle cx="315.9" cy="554.0" r="2"/><circle cx="317.6" cy="571.4" r="2"/><circle cx="319.3" cy="558.0" r="2"/><circle cx="321.0" cy="562.4" r="2"/><circle cx="322.7" cy="526.1" r="2"/><circle cx="324.4" cy="510.0" r="2"/><circle cx="326.1" cy="500.2" r="2"/><circle cx="328.7" cy="537.3" r="2"/><circle cx="331.3" cy="510.8" r="2"/><circle cx="333.9" cy="539.0" r="2"/><circle cx="336.5" cy="526.4" r="2"/><circle cx="339.1" cy="548.1" r="2"/><circle cx="341.7" cy="519.6" r="2"/><circle cx="344.3" cy="535.0" r="2"/><circle cx="346.9" cy="511.9" r="2"/><circle cx="349.5" cy="506.8" r="2"/><circle cx="352.1" cy="517.4" r="2"/><circle cx="355.7" cy="523.7" r="2"/><circle cx="359.3" cy="521.6" r="2"/><circle cx="362.9" cy="520.7" r="2"/><circle cx="366.5" cy="508.1" r="2"/><circle cx="370.1" cy="519.2" r="2"/><circle cx="373.7" cy="512.8" r="2"/><circle cx="377.3" cy="520.8" r="2"/><circle cx="380.9" cy="503.9" r="2"/><circle cx="384.5" cy="516.3" r="2"/><circle cx="388.1" cy="502.9" r="2"/><circle cx="391.7" cy="515.2" r="2"/><circle cx="395.3" cy="513.9" r="2"/><circle cx="398.9" cy="508.5" r="2"/><circle cx="402.5" cy="500.8" r="2"/><circle cx="406.7" cy="515.0" r="2"/><circle cx="410.9" cy="505.1" r="2"/><circle cx="415.1" cy="516.7" r="2"/><circle cx="419.3" cy="503.5" r="2"/><circle cx="423.5" cy="508.9" r="2"/><circle cx="427.7" cy="502.8" r="2"/><circle cx="431.9" cy="511.7" r="2"/><circle cx="436.1" cy="497.0" r="2"/><circle cx="440.3" cy="502.2" r="2"/><circle cx="444.5" cy="502.1" r="2"/><circle cx="448.7" cy="504.4" r="2"/><circle cx="452.9" cy="489.3" r="2"/><circle cx="457.1" cy="495.1" r="2"/><circle cx="461.3" cy="487.9" r="2"/><circle cx="465.5" cy="498.3" r="2"/><circle cx="469.7" cy="500.4" r="2"/><circle cx="473.9" cy="525.0" r="2"/><circle cx="476.0" cy="619.5" r="2"/><circle cx="482.3" cy="492.8" r="2"/><circle cx="486.5" cy="496.7" r="2"/><circle cx="490.7" cy="499.2" r="2"/><circle cx="494.9" cy="496.9" r="2"/><circle cx="499.1" cy="499.5" r="2"/><circle cx="503.3" cy="497.7" r="2"/><circle cx="507.5" cy="495.3" r="2"/><circle cx="511.7" cy="495.5" r="2"/><circle cx="515.9" cy="498.3" r="2"/><circle cx="520.1" cy="495.9" r="2"/><circle cx="524.3" cy="497.7" r="2"/><circle cx="528.5" cy="493.4" r="2"/><circle cx="532.7" cy="495.5" r="2"/><circle cx="536.9" cy="493.0" r="2"/><circle cx="541.1" cy="494.7" r="2"/><circle cx="545.3" cy="493.8" r="2"/><circle cx="549.5" cy="494.2" r="2"/><circle cx="553.7" cy="491.5" r="2"/><circle cx="557.9" cy="494.8" r="2"/><circle cx="562.1" cy="492.6" r="2"/><circle cx="566.3" cy="495.5" r="2"/><circle cx="570.5" cy="492.9" r="2"/><circle cx="574.7" cy="494.4" r="2"/><circle cx="578.9" cy="495.7" r="2"/><circle cx="583.1" cy="495.7" r="2"/><circle cx="587.3" cy="492.3" r="2"/><circle cx="591.5" cy="495.2" r="2"/><circle cx="595.7" cy="492.3" r="2"/><circle cx="599.9" cy="493.1" r="2"/><circle cx="604.1" cy="491.3" r="2"/><circle cx="608.3" cy="495.0" r="2"/><circle cx="612.5" cy="491.4" r="2"/><circle cx="616.0" cy="594.7" r="2"/><circle cx="622.0" cy="461.0" r="2"/><circle cx="625.1" cy="483.6" r="2"/><circle cx="631.0" cy="599.6" r="2"/><circle cx="633.5" cy="475.2" r="2"/><circle cx="636.0" cy="465.6" r="2"/><circle cx="641.9" cy="490.3" r="2"/><circle cx="646.1" cy="495.0" r="2"/><circle cx="650.3" cy="503.3" r="2"/><circle cx="656.0" cy="600.0" r="2"/><circle cx="658.7" cy="486.4" r="2"/><circle cx="661.0" cy="468.7" r="2"/><circle cx="667.1" cy="487.1" r="2"/><circle cx="671.3" cy="489.5" r="2"/><circle cx="675.5" cy="496.7" r="2"/><circle cx="679.7" cy="499.2" r="2"/><circle cx="683.9" cy="500.8" r="2"/><circle cx="688.1" cy="495.7" r="2"/><circle cx="692.3" cy="494.2" r="2"/><circle cx="696.5" cy="494.6" r="2"/><circle cx="700.7" cy="494.6" r="2"/><circle cx="704.9" cy="490.8" r="2"/><circle cx="709.1" cy="494.0" r="2"/><circle cx="713.3" cy="491.4" r="2"/><circle cx="717.5" cy="490.5" r="2"/><circle cx="721.7" cy="491.2" r="2"/><circle cx="725.9" cy="493.0" r="2"/><circle cx="730.1" cy="491.3" r="2"/><circle cx="734.3" cy="491.6" r="2"/><circle cx="738.5" cy="490.8" r="2"/><circle cx="742.7" cy="493.9" r="2"/><circle cx="746.9" cy="489.6" r="2"/><circle cx="751.1" cy="493.9" r="2"/><circle cx="757.0" cy="593.0" r="2"/><circle cx="759.5" cy="472.7" r="2"/><circle cx="762.0" cy="460.0" r="2"/><circle cx="767.9" cy="487.5" r="2"/><circle cx="772.1" cy="492.6" r="2"/><circle cx="775.0" cy="601.0" r="2"/><circle cx="780.0" cy="468.0" r="2"/><circle cx="784.7" cy="487.9" r="2"/><circle cx="788.9" cy="491.3" r="2"/><circle cx="793.1" cy="500.1" r="2"/><circle cx="797.3" cy="501.1" r="2"/><circle cx="801.5" cy="501.4" r="2"/><circle cx="805.7" cy="497.0" r="2"/><circle cx="809.9" cy="496.5" r="2"/><circle cx="814.1" cy="491.3" r="2"/><circle cx="818.3" cy="494.4" r="2"/><circle cx="822.5" cy="494.0" r="2"/><circle cx="826.7" cy="493.7" r="2"/><circle cx="830.9" cy="492.0" r="2"/><circle cx="835.1" cy="494.1" r="2"/><circle cx="839.3" cy="491.4" r="2"/><circle cx="843.5" cy="494.6" r="2"/><circle cx="847.7" cy="491.6" r="2"/><circle cx="851.9" cy="493.5" r="2"/><circle cx="856.1" cy="491.6" r="2"/><circle cx="860.3" cy="491.7" r="2"/><circle cx="864.5" cy="493.1" r="2"/><circle cx="868.7" cy="489.9" r="2"/><circle cx="872.9" cy="485.4" r="2"/><circle cx="875.3" cy="593.0" r="2"/><circle cx="881.0" cy="460.0" r="2"/><circle cx="885.5" cy="488.0" r="2"/><circle cx="889.7" cy="493.6" r="2"/><circle cx="894.0" cy="602.6" r="2"/><circle cx="897.6" cy="471.0" r="2"/><circle cx="902.3" cy="487.9" r="2"/><circle cx="906.5" cy="494.6" r="2"/><circle cx="910.7" cy="501.5" r="2"/><circle cx="914.9" cy="501.0" r="2"/><circle cx="919.1" cy="503.1" r="2"/><circle cx="923.3" cy="495.9" r="2"/><circle cx="927.5" cy="495.0" r="2"/><circle cx="931.7" cy="484.1" r="2"/><circle cx="935.9" cy="481.3" r="2"/><circle cx="941.0" cy="487.0" r="2"/><circle cx="944.5" cy="494.0" r="2"/><circle cx="948.0" cy="499.7" r="2"/><circle cx="951.4" cy="580.6" r="2"/><circle cx="955.0" cy="490.0" r="2"/><circle cx="958.4" cy="512.0" r="2"/><circle cx="961.8" cy="529.5" r="2"/><circle cx="965.4" cy="512.0" r="2"/><circle cx="969.0" cy="526.0" r="2"/><circle cx="973.0" cy="499.7" r="2"/><circle cx="976.8" cy="522.0" r="2"/><circle cx="980.3" cy="501.0" r="2"/><circle cx="983.5" cy="511.8" r="2"/><circle cx="987.6" cy="507.7" r="2"/><circle cx="991.6" cy="539.0" r="2"/></g>
<g opacity="0.45">
<polyline fill="none" stroke-width="1" points="991.6,539.0 994.5,547.0"/>
<g stroke="none"><circle cx="994.5" cy="547.0" r="2"/></g>
</g>
</g>
<g stroke="#b8961c" fill="#b8961c">
<polyline shape-rendering="crispEdges" fill="none" stroke-width="1" points="99.5,500.3 103.7,504.9 107.9,499.2 112.1,508.8 116.3,507.2 120.5,508.3 124.7,500.1 128.9,505.7 133.1,499.8 137.3,505.7 141.5,499.5 145.7,509.2 149.9,498.8 154.1,506.7 158.3,499.0 162.5,507.9 166.7,501.3 170.9,507.1 175.1,498.5 179.3,509.3 183.5,499.6 187.7,506.8 191.9,497.9 196.1,502.2 200.3,499.7 204.5,508.1 208.7,486.5 211.3,485.3 213.9,456.1 216.5,459.4 219.1,434.4 221.7,444.9 224.3,428.8 225.7,446.1 227.2,429.8 228.6,429.9 230.1,430.8 231.5,447.6 233.0,444.3 234.4,449.6 235.9,435.2 237.3,452.5 238.8,428.2 240.2,444.4 241.7,433.2 243.1,446.3 244.6,438.6 246.0,448.2 247.5,445.5 248.9,461.8 250.4,436.8 251.8,456.9 253.3,462.5 254.7,456.0 256.2,448.5 257.6,468.4 259.1,457.1 260.5,450.7 262.0,461.8 263.4,471.6 264.9,465.3 266.3,500.5 267.8,475.2 269.2,511.2 270.7,498.5 272.1,511.8 273.6,480.3 275.0,497.9 276.5,470.1 277.9,467.0 279.4,498.1 280.8,497.9 282.3,490.1 283.7,556.1 285.2,575.3 286.6,605.0 288.1,587.7 289.5,617.8 291.0,604.5 292.4,592.1 293.9,575.3 295.3,576.2 296.8,586.6 298.2,585.1 299.7,564.0 301.1,572.9 302.8,561.6 304.5,573.0 306.2,550.7 307.9,571.1 309.6,551.9 311.3,559.4 313.0,572.4 314.7,559.8 316.4,540.9 318.1,563.4 319.8,541.8 321.5,536.4 323.2,512.1 325.0,470.7 326.6,510.7 329.2,528.0 331.8,522.5 334.4,520.4 337.0,506.8 339.6,527.8 342.2,524.9 344.8,522.0 347.4,492.7 350.0,519.9 352.6,498.6 356.2,508.9 359.8,500.9 363.4,507.6 367.0,498.6 370.6,513.7 374.2,511.6 377.8,509.5 381.4,514.4 385.0,508.1 388.6,497.8 392.2,504.6 395.8,501.4 399.4,507.4 403.0,496.9 407.2,505.8 411.4,496.4 415.6,506.5 419.8,496.1 424.0,500.6 428.2,504.3 432.4,498.9 436.6,490.0 440.8,488.3 445.0,496.2 449.2,494.6 453.4,481.5 457.6,484.2 461.8,480.0 466.0,489.7 470.2,500.6 474.4,526.1 478.6,482.0 482.8,490.6 487.0,490.5 491.2,495.5 495.4,492.8 499.6,493.4 503.8,493.5 508.0,495.2 512.2,491.3 516.4,494.6 520.6,491.6 524.8,493.7 529.0,494.6 533.2,492.1 537.4,487.9 541.6,490.0 545.8,487.4 550.0,490.6 554.2,487.3 558.4,490.1 562.6,489.5 566.8,491.9 571.0,488.7 575.2,491.9 579.5,488.1 583.7,491.9 587.9,487.9 592.1,492.0 596.3,489.0 600.5,491.9 604.7,491.1 608.9,490.9 613.1,488.3 617.3,482.8 621.5,468.4 625.7,479.6 629.9,482.9 634.1,473.3 638.3,476.8 642.5,487.3 646.7,493.8 650.9,501.1 655.1,495.9 659.3,481.7 663.5,478.3 667.7,484.4 671.9,487.3 676.1,494.2 680.3,494.7 684.5,497.5 688.7,492.6 692.9,493.3 697.1,490.2 701.3,491.3 705.5,485.9 709.7,489.9 713.9,487.0 718.1,488.2 722.3,487.7 726.5,489.8 730.7,484.4 734.9,488.9 739.1,486.4 743.3,488.1 747.5,486.1 751.7,487.7 755.9,476.7 760.1,469.8 764.3,479.1 768.5,489.3 772.7,488.3 776.9,483.2 781.1,475.5 785.3,484.5 789.5,488.7 793.7,497.6 797.9,496.7 802.1,498.0 806.3,492.7 810.5,491.3 814.7,487.3 818.9,491.6 823.1,487.5 827.3,490.6 831.5,489.8 835.7,489.9 839.9,487.3 844.1,488.6 848.3,486.3 852.5,490.4 856.7,486.1 860.9,488.6 865.1,486.2 869.3,487.7 873.5,481.6 877.7,474.2 881.9,472.5 886.1,483.7 890.3,488.1 894.5,483.0 898.7,475.8 902.9,486.7 907.1,490.2 911.3,496.9 915.5,496.5 919.7,497.8 923.9,493.8 928.1,488.6 932.3,479.5 936.5,475.9 940.0,478.0 944.0,489.0 948.0,494.0 952.0,495.0 955.0,508.5 958.5,512.6 963.4,504.5 965.8,500.5 969.8,529.5 973.0,490.0 976.3,518.0 980.0,509.0 983.5,498.0 988.4,513.4 991.6,542.0"/>
<g stroke="none"><circle cx="99.5" cy="500.3" r="2"/><circle cx="103.7" cy="504.9" r="2"/><circle cx="107.9" cy="499.2" r="2"/><circle cx="112.1" cy="508.8" r="2"/><circle cx="116.3" cy="507.2" r="2"/><circle cx="120.5" cy="508.3" r="2"/><circle cx="124.7" cy="500.1" r="2"/><circle cx="128.9" cy="505.7" r="2"/><circle cx="133.1" cy="499.8" r="2"/><circle cx="137.3" cy="505.7" r="2"/><circle cx="141.5" cy="499.5" r="2"/><circle cx="145.7" cy="509.2" r="2"/><circle cx="149.9" cy="498.8" r="2"/><circle cx="154.1" cy="506.7" r="2"/><circle cx="158.3" cy="499.0" r="2"/><circle cx="162.5" cy="507.9" r="2"/><circle cx="166.7" cy="501.3" r="2"/><circle cx="170.9" cy="507.1" r="2"/><circle cx="175.1" cy="498.5" r="2"/><circle cx="179.3" cy="509.3" r="2"/><circle cx="183.5" cy="499.6" r="2"/><circle cx="187.7" cy="506.8" r="2"/><circle cx="191.9" cy="497.9" r="2"/><circle cx="196.1" cy="502.2" r="2"/><circle cx="200.3" cy="499.7" r="2"/><circle cx="204.5" cy="508.1" r="2"/><circle cx="208.7" cy="486.5" r="2"/><circle cx="211.3" cy="485.3" r="2"/><circle cx="213.9" cy="456.1" r="2"/><circle cx="216.5" cy="459.4" r="2"/><circle cx="219.1" cy="434.4" r="2"/><circle cx="221.7" cy="444.9" r="2"/><circle cx="224.3" cy="428.8" r="2"/><circle cx="225.7" cy="446.1" r="2"/><circle cx="227.2" cy="429.8" r="2"/><circle cx="228.6" cy="429.9" r="2"/><circle cx="230.1" cy="430.8" r="2"/><circle cx="231.5" cy="447.6" r="2"/><circle cx="233.0" cy="444.3" r="2"/><circle cx="234.4" cy="449.6" r="2"/><circle cx="235.9" cy="435.2" r="2"/><circle cx="237.3" cy="452.5" r="2"/><circle cx="238.8" cy="428.2" r="2"/><circle cx="240.2" cy="444.4" r="2"/><circle cx="241.7" cy="433.2" r="2"/><circle cx="243.1" cy="446.3" r="2"/><circle cx="244.6" cy="438.6" r="2"/><circle cx="246.0" cy="448.2" r="2"/><circle cx="247.5" cy="445.5" r="2"/><circle cx="248.9" cy="461.8" r="2"/><circle cx="250.4" cy="436.8" r="2"/><circle cx="251.8" cy="456.9" r="2"/><circle cx="253.3" cy="462.5" r="2"/><circle cx="254.7" cy="456.0" r="2"/><circle cx="256.2" cy="448.5" r="2"/><circle cx="257.6" cy="468.4" r="2"/><circle cx="259.1" cy="457.1" r="2"/><circle cx="260.5" cy="450.7" r="2"/><circle cx="262.0" cy="461.8" r="2"/><circle cx="263.4" cy="471.6" r="2"/><circle cx="264.9" cy="465.3" r="2"/><circle cx="266.3" cy="500.5" r="2"/><circle cx="267.8" cy="475.2" r="2"/><circle cx="269.2" cy="511.2" r="2"/><circle cx="270.7" cy="498.5" r="2"/><circle cx="272.1" cy="511.8" r="2"/><circle cx="273.6" cy="480.3" r="2"/><circle cx="275.0" cy="497.9" r="2"/><circle cx="276.5" cy="470.1" r="2"/><circle cx="277.9" cy="467.0" r="2"/><circle cx="279.4" cy="498.1" r="2"/><circle cx="280.8" cy="497.9" r="2"/><circle cx="282.3" cy="490.1" r="2"/><circle cx="283.7" cy="556.1" r="2"/><circle cx="285.2" cy="575.3" r="2"/><circle cx="286.6" cy="605.0" r="2"/><circle cx="288.1" cy="587.7" r="2"/><circle cx="289.5" cy="617.8" r="2"/><circle cx="291.0" cy="604.5" r="2"/><circle cx="292.4" cy="592.1" r="2"/><circle cx="293.9" cy="575.3" r="2"/><circle cx="295.3" cy="576.2" r="2"/><circle cx="296.8" cy="586.6" r="2"/><circle cx="298.2" cy="585.1" r="2"/><circle cx="299.7" cy="564.0" r="2"/><circle cx="301.1" cy="572.9" r="2"/><circle cx="302.8" cy="561.6" r="2"/><circle cx="304.5" cy="573.0" r="2"/><circle cx="306.2" cy="550.7" r="2"/><circle cx="307.9" cy="571.1" r="2"/><circle cx="309.6" cy="551.9" r="2"/><circle cx="311.3" cy="559.4" r="2"/><circle cx="313.0" cy="572.4" r="2"/><circle cx="314.7" cy="559.8" r="2"/><circle cx="316.4" cy="540.9" r="2"/><circle cx="318.1" cy="563.4" r="2"/><circle cx="319.8" cy="541.8" r="2"/><circle cx="321.5" cy="536.4" r="2"/><circle cx="323.2" cy="512.1" r="2"/><circle cx="325.0" cy="470.7" r="2"/><circle cx="326.6" cy="510.7" r="2"/><circle cx="329.2" cy="528.0" r="2"/><circle cx="331.8" cy="522.5" r="2"/><circle cx="334.4" cy="520.4" r="2"/><circle cx="337.0" cy="506.8" r="2"/><circle cx="339.6" cy="527.8" r="2"/><circle cx="342.2" cy="524.9" r="2"/><circle cx="344.8" cy="522.0" r="2"/><circle cx="347.4" cy="492.7" r="2"/><circle cx="350.0" cy="519.9" r="2"/><circle cx="352.6" cy="498.6" r="2"/><circle cx="356.2" cy="508.9" r="2"/><circle cx="359.8" cy="500.9" r="2"/><circle cx="363.4" cy="507.6" r="2"/><circle cx="367.0" cy="498.6" r="2"/><circle cx="370.6" cy="513.7" r="2"/><circle cx="374.2" cy="511.6" r="2"/><circle cx="377.8" cy="509.5" r="2"/><circle cx="381.4" cy="514.4" r="2"/><circle cx="385.0" cy="508.1" r="2"/><circle cx="388.6" cy="497.8" r="2"/><circle cx="392.2" cy="504.6" r="2"/><circle cx="395.8" cy="501.4" r="2"/><circle cx="399.4" cy="507.4" r="2"/><circle cx="403.0" cy="496.9" r="2"/><circle cx="407.2" cy="505.8" r="2"/><circle cx="411.4" cy="496.4" r="2"/><circle cx="415.6" cy="506.5" r="2"/><circle cx="419.8" cy="496.1" r="2"/><circle cx="424.0" cy="500.6" r="2"/><circle cx="428.2" cy="504.3" r="2"/><circle cx="432.4" cy="498.9" r="2"/><circle cx="436.6" cy="490.0" r="2"/><circle cx="440.8" cy="488.3" r="2"/><circle cx="445.0" cy="496.2" r="2"/><circle cx="449.2" cy="494.6" r="2"/><circle cx="453.4" cy="481.5" r="2"/><circle cx="457.6" cy="484.2" r="2"/><circle cx="461.8" cy="480.0" r="2"/><circle cx="466.0" cy="489.7" r="2"/><circle cx="470.2" cy="500.6" r="2"/><circle cx="474.4" cy="526.1" r="2"/><circle cx="478.6" cy="482.0" r="2"/><circle cx="482.8" cy="490.6" r="2"/><circle cx="487.0" cy="490.5" r="2"/><circle cx="491.2" cy="495.5" r="2"/><circle cx="495.4" cy="492.8" r="2"/><circle cx="499.6" cy="493.4" r="2"/><circle cx="503.8" cy="493.5" r="2"/><circle cx="508.0" cy="495.2" r="2"/><circle cx="512.2" cy="491.3" r="2"/><circle cx="516.4" cy="494.6" r="2"/><circle cx="520.6" cy="491.6" r="2"/><circle cx="524.8" cy="493.7" r="2"/><circle cx="529.0" cy="494.6" r="2"/><circle cx="533.2" cy="492.1" r="2"/><circle cx="537.4" cy="487.9" r="2"/><circle cx="541.6" cy="490.0" r="2"/><circle cx="545.8" cy="487.4" r="2"/><circle cx="550.0" cy="490.6" r="2"/><circle cx="554.2" cy="487.3" r="2"/><circle cx="558.4" cy="490.1" r="2"/><circle cx="562.6" cy="489.5" r="2"/><circle cx="566.8" cy="491.9" r="2"/><circle cx="571.0" cy="488.7" r="2"/><circle cx="575.2" cy="491.9" r="2"/><circle cx="579.5" cy="488.1" r="2"/><circle cx="583.7" cy="491.9" r="2"/><circle cx="587.9" cy="487.9" r="2"/><circle cx="592.1" cy="492.0" r="2"/><circle cx="596.3" cy="489.0" r="2"/><circle cx="600.5" cy="491.9" r="2"/><circle cx="604.7" cy="491.1" r="2"/><circle cx="608.9" cy="490.9" r="2"/><circle cx="613.1" cy="488.3" r="2"/><circle cx="617.3" cy="482.8" r="2"/><circle cx="621.5" cy="468.4" r="2"/><circle cx="625.7" cy="479.6" r="2"/><circle cx="629.9" cy="482.9" r="2"/><circle cx="634.1" cy="473.3" r="2"/><circle cx="638.3" cy="476.8" r="2"/><circle cx="642.5" cy="487.3" r="2"/><circle cx="646.7" cy="493.8" r="2"/><circle cx="650.9" cy="501.1" r="2"/><circle cx="655.1" cy="495.9" r="2"/><circle cx="659.3" cy="481.7" r="2"/><circle cx="663.5" cy="478.3" r="2"/><circle cx="667.7" cy="484.4" r="2"/><circle cx="671.9" cy="487.3" r="2"/><circle cx="676.1" cy="494.2" r="2"/><circle cx="680.3" cy="494.7" r="2"/><circle cx="684.5" cy="497.5" r="2"/><circle cx="688.7" cy="492.6" r="2"/><circle cx="692.9" cy="493.3" r="2"/><circle cx="697.1" cy="490.2" r="2"/><circle cx="701.3" cy="491.3" r="2"/><circle cx="705.5" cy="485.9" r="2"/><circle cx="709.7" cy="489.9" r="2"/><circle cx="713.9" cy="487.0" r="2"/><circle cx="718.1" cy="488.2" r="2"/><circle cx="722.3" cy="487.7" r="2"/><circle cx="726.5" cy="489.8" r="2"/><circle cx="730.7" cy="484.4" r="2"/><circle cx="734.9" cy="488.9" r="2"/><circle cx="739.1" cy="486.4" r="2"/><circle cx="743.3" cy="488.1" r="2"/><circle cx="747.5" cy="486.1" r="2"/><circle cx="751.7" cy="487.7" r="2"/><circle cx="755.9" cy="476.7" r="2"/><circle cx="760.1" cy="469.8" r="2"/><circle cx="764.3" cy="479.1" r="2"/><circle cx="768.5" cy="489.3" r="2"/><circle cx="772.7" cy="488.3" r="2"/><circle cx="776.9" cy="483.2" r="2"/><circle cx="781.1" cy="475.5" r="2"/><circle cx="785.3" cy="484.5" r="2"/><circle cx="789.5" cy="488.7" r="2"/><circle cx="793.7" cy="497.6" r="2"/><circle cx="797.9" cy="496.7" r="2"/><circle cx="802.1" cy="498.0" r="2"/><circle cx="806.3" cy="492.7" r="2"/><circle cx="810.5" cy="491.3" r="2"/><circle cx="814.7" cy="487.3" r="2"/><circle cx="818.9" cy="491.6" r="2"/><circle cx="823.1" cy="487.5" r="2"/><circle cx="827.3" cy="490.6" r="2"/><circle cx="831.5" cy="489.8" r="2"/><circle cx="835.7" cy="489.9" r="2"/><circle cx="839.9" cy="487.3" r="2"/><circle cx="844.1" cy="488.6" r="2"/><circle cx="848.3" cy="486.3" r="2"/><circle cx="852.5" cy="490.4" r="2"/><circle cx="856.7" cy="486.1" r="2"/><circle cx="860.9" cy="488.6" r="2"/><circle cx="865.1" cy="486.2" r="2"/><circle cx="869.3" cy="487.7" r="2"/><circle cx="873.5" cy="481.6" r="2"/><circle cx="877.7" cy="474.2" r="2"/><circle cx="881.9" cy="472.5" r="2"/><circle cx="886.1" cy="483.7" r="2"/><circle cx="890.3" cy="488.1" r="2"/><circle cx="894.5" cy="483.0" r="2"/><circle cx="898.7" cy="475.8" r="2"/><circle cx="902.9" cy="486.7" r="2"/><circle cx="907.1" cy="490.2" r="2"/><circle cx="911.3" cy="496.9" r="2"/><circle cx="915.5" cy="496.5" r="2"/><circle cx="919.7" cy="497.8" r="2"/><circle cx="923.9" cy="493.8" r="2"/><circle cx="928.1" cy="488.6" r="2"/><circle cx="932.3" cy="479.5" r="2"/><circle cx="936.5" cy="475.9" r="2"/><circle cx="940.0" cy="478.0" r="2"/><circle cx="944.0" cy="489.0" r="2"/><circle cx="948.0" cy="494.0" r="2"/><circle cx="952.0" cy="495.0" r="2"/><circle cx="955.0" cy="508.5" r="2"/><circle cx="958.5" cy="512.6" r="2"/><circle cx="963.4" cy="504.5" r="2"/><circle cx="965.8" cy="500.5" r="2"/><circle cx="969.8" cy="529.5" r="2"/><circle cx="973.0" cy="490.0" r="2"/><circle cx="976.3" cy="518.0" r="2"/><circle cx="980.0" cy="509.0" r="2"/><circle cx="983.5" cy="498.0" r="2"/><circle cx="988.4" cy="513.4" r="2"/><circle cx="991.6" cy="542.0" r="2"/></g>
<g opacity="0.45">
<polyline fill="none" stroke-width="1" points="991.6,542.0 995.0,549.0"/>
<g stroke="none"><circle cx="995.0" cy="549.0" r="2"/></g>
</g>
</g>
<g stroke="#16961f" fill="#16961f">
<polyline shape-rendering="crispEdges" fill="none" stroke-width="1" points="102.7,513.0 106.9,518.4 111.1,506.6 115.3,513.1 119.5,507.4 123.7,514.2 127.9,509.7 132.1,514.0 136.2,507.9 140.4,507.8 144.6,507.8 148.8,519.4 153.0,512.2 157.2,519.9 161.4,509.8 165.6,519.1 169.8,518.4 174.0,513.4 178.2,512.1 182.4,519.2 186.6,510.8 190.8,515.6 195.0,502.8 199.2,516.4 203.4,514.2 207.6,506.2 210.2,482.1 212.8,491.2 215.4,479.8 218.0,472.5 220.6,455.7 223.2,447.5 224.7,448.4 226.1,468.5 227.6,447.6 229.0,470.4 230.5,444.6 231.9,467.4 233.4,451.7 234.8,466.4 236.3,457.1 237.7,467.0 239.2,455.7 240.6,466.0 242.1,456.3 243.5,472.9 245.0,461.8 246.4,468.1 247.9,456.2 249.3,466.6 250.8,453.2 252.2,452.6 253.7,468.0 255.1,467.4 256.6,456.2 258.0,469.5 259.5,455.9 260.9,479.8 262.4,474.8 263.8,501.3 265.3,483.4 266.7,503.9 268.2,494.3 269.6,515.8 271.1,503.5 272.5,514.3 274.0,482.2 275.4,526.9 276.9,483.7 278.3,521.5 279.8,482.7 281.2,520.0 282.7,512.0 284.1,561.0 285.6,558.5 287.0,621.2 288.5,580.1 289.9,602.8 291.4,593.1 292.8,593.0 294.3,584.5 295.7,598.9 297.2,575.0 298.6,586.4 300.1,583.7 301.8,590.2 303.5,571.6 305.2,589.3 306.9,565.3 308.6,566.9 310.3,561.6 312.0,573.4 313.7,566.8 315.4,580.7 317.1,565.9 318.8,571.4 320.5,555.2 322.2,541.4 323.9,512.4 325.6,513.5 327.3,520.5 329.9,538.6 332.5,515.6 335.1,541.7 337.7,529.3 340.3,549.0 342.9,520.0 345.5,512.5 348.1,550.0 350.7,538.6 353.3,529.8 356.9,516.1 360.5,503.1 364.1,519.6 367.7,512.5 371.3,519.3 374.9,511.9 378.5,519.1 382.1,521.3 385.7,521.0 389.3,505.8 392.9,516.2 396.5,510.7 400.1,515.0 404.3,504.6 408.5,515.5 412.7,503.4 416.9,512.1 421.1,504.8 425.3,503.6 429.5,501.3 433.7,506.6 437.9,502.7 442.1,507.3 446.3,497.1 450.5,504.8 454.7,491.0 458.9,492.8 463.1,496.5 467.3,504.5 471.5,514.1 475.7,522.5 479.9,487.8 484.1,495.3 488.3,494.3 492.5,498.5 496.7,499.1 500.9,500.4 505.1,497.8 509.3,496.2 513.5,496.5 517.7,497.8 521.9,495.6 526.1,498.7 530.3,496.4 534.5,495.4 538.7,494.1 542.9,494.8 547.1,491.9 551.3,495.4 555.5,492.0 559.7,494.3 563.9,493.6 568.1,494.5 572.3,493.4 576.5,496.0 580.7,493.1 584.9,495.9 589.1,492.8 593.3,494.8 597.5,492.1 601.7,496.2 605.9,493.0 610.1,495.4 614.3,490.9 618.5,484.5 622.7,474.2 626.9,486.5 631.1,480.4 635.3,476.3 639.5,483.5 643.7,494.0 647.9,498.9 652.1,506.6 656.3,494.4 660.5,480.9 664.7,483.3 668.9,490.5 673.1,496.4 677.3,500.3 681.5,498.2 685.7,497.8 689.9,496.6 694.1,494.5 698.3,494.4 702.5,494.6 706.7,492.5 710.9,494.5 715.1,492.7 719.3,494.0 723.5,491.6 727.7,494.2 731.9,491.5 736.1,490.6 740.3,491.7 744.5,492.9 748.7,493.9 752.9,490.6 757.1,482.2 761.3,473.8 765.5,485.7 769.7,492.9 773.9,493.1 778.1,484.9 782.3,484.1 786.5,490.8 790.7,494.0 794.9,500.8 799.1,500.5 803.3,501.6 807.5,495.2 811.7,496.2 815.9,494.0 820.1,495.5 824.3,492.1 828.5,493.7 832.7,491.3 836.9,493.4 841.1,491.8 845.3,495.0 849.5,490.7 853.7,493.8 857.9,492.9 862.1,495.6 866.3,491.2 870.5,492.9 874.7,482.6 878.9,477.0 883.1,479.7 887.3,490.4 891.5,495.3 895.7,485.6 899.9,482.1 904.1,492.5 908.3,496.1 912.5,503.0 916.7,502.3 920.9,502.3 925.1,494.6 929.3,490.8 933.5,482.9 937.7,477.8 940.0,490.0 942.4,494.8 945.6,509.0 949.7,511.0 953.7,513.0 957.0,517.0 960.0,519.8 964.0,512.0 968.0,506.0 970.5,522.0 973.9,533.0 977.9,494.8 982.0,544.8 985.2,479.8 989.2,565.8"/>
<g stroke="none"><circle cx="102.7" cy="513.0" r="2"/><circle cx="106.9" cy="518.4" r="2"/><circle cx="111.1" cy="506.6" r="2"/><circle cx="115.3" cy="513.1" r="2"/><circle cx="119.5" cy="507.4" r="2"/><circle cx="123.7" cy="514.2" r="2"/><circle cx="127.9" cy="509.7" r="2"/><circle cx="132.1" cy="514.0" r="2"/><circle cx="136.2" cy="507.9" r="2"/><circle cx="140.4" cy="507.8" r="2"/><circle cx="144.6" cy="507.8" r="2"/><circle cx="148.8" cy="519.4" r="2"/><circle cx="153.0" cy="512.2" r="2"/><circle cx="157.2" cy="519.9" r="2"/><circle cx="161.4" cy="509.8" r="2"/><circle cx="165.6" cy="519.1" r="2"/><circle cx="169.8" cy="518.4" r="2"/><circle cx="174.0" cy="513.4" r="2"/><circle cx="178.2" cy="512.1" r="2"/><circle cx="182.4" cy="519.2" r="2"/><circle cx="186.6" cy="510.8" r="2"/><circle cx="190.8" cy="515.6" r="2"/><circle cx="195.0" cy="502.8" r="2"/><circle cx="199.2" cy="516.4" r="2"/><circle cx="203.4" cy="514.2" r="2"/><circle cx="207.6" cy="506.2" r="2"/><circle cx="210.2" cy="482.1" r="2"/><circle cx="212.8" cy="491.2" r="2"/><circle cx="215.4" cy="479.8" r="2"/><circle cx="218.0" cy="472.5" r="2"/><circle cx="220.6" cy="455.7" r="2"/><circle cx="223.2" cy="447.5" r="2"/><circle cx="224.7" cy="448.4" r="2"/><circle cx="226.1" cy="468.5" r="2"/><circle cx="227.6" cy="447.6" r="2"/><circle cx="229.0" cy="470.4" r="2"/><circle cx="230.5" cy="444.6" r="2"/><circle cx="231.9" cy="467.4" r="2"/><circle cx="233.4" cy="451.7" r="2"/><circle cx="234.8" cy="466.4" r="2"/><circle cx="236.3" cy="457.1" r="2"/><circle cx="237.7" cy="467.0" r="2"/><circle cx="239.2" cy="455.7" r="2"/><circle cx="240.6" cy="466.0" r="2"/><circle cx="242.1" cy="456.3" r="2"/><circle cx="243.5" cy="472.9" r="2"/><circle cx="245.0" cy="461.8" r="2"/><circle cx="246.4" cy="468.1" r="2"/><circle cx="247.9" cy="456.2" r="2"/><circle cx="249.3" cy="466.6" r="2"/><circle cx="250.8" cy="453.2" r="2"/><circle cx="252.2" cy="452.6" r="2"/><circle cx="253.7" cy="468.0" r="2"/><circle cx="255.1" cy="467.4" r="2"/><circle cx="256.6" cy="456.2" r="2"/><circle cx="258.0" cy="469.5" r="2"/><circle cx="259.5" cy="455.9" r="2"/><circle cx="260.9" cy="479.8" r="2"/><circle cx="262.4" cy="474.8" r="2"/><circle cx="263.8" cy="501.3" r="2"/><circle cx="265.3" cy="483.4" r="2"/><circle cx="266.7" cy="503.9" r="2"/><circle cx="268.2" cy="494.3" r="2"/><circle cx="269.6" cy="515.8" r="2"/><circle cx="271.1" cy="503.5" r="2"/><circle cx="272.5" cy="514.3" r="2"/><circle cx="274.0" cy="482.2" r="2"/><circle cx="275.4" cy="526.9" r="2"/><circle cx="276.9" cy="483.7" r="2"/><circle cx="278.3" cy="521.5" r="2"/><circle cx="279.8" cy="482.7" r="2"/><circle cx="281.2" cy="520.0" r="2"/><circle cx="282.7" cy="512.0" r="2"/><circle cx="284.1" cy="561.0" r="2"/><circle cx="285.6" cy="558.5" r="2"/><circle cx="287.0" cy="621.2" r="2"/><circle cx="288.5" cy="580.1" r="2"/><circle cx="289.9" cy="602.8" r="2"/><circle cx="291.4" cy="593.1" r="2"/><circle cx="292.8" cy="593.0" r="2"/><circle cx="294.3" cy="584.5" r="2"/><circle cx="295.7" cy="598.9" r="2"/><circle cx="297.2" cy="575.0" r="2"/><circle cx="298.6" cy="586.4" r="2"/><circle cx="300.1" cy="583.7" r="2"/><circle cx="301.8" cy="590.2" r="2"/><circle cx="303.5" cy="571.6" r="2"/><circle cx="305.2" cy="589.3" r="2"/><circle cx="306.9" cy="565.3" r="2"/><circle cx="308.6" cy="566.9" r="2"/><circle cx="310.3" cy="561.6" r="2"/><circle cx="312.0" cy="573.4" r="2"/><circle cx="313.7" cy="566.8" r="2"/><circle cx="315.4" cy="580.7" r="2"/><circle cx="317.1" cy="565.9" r="2"/><circle cx="318.8" cy="571.4" r="2"/><circle cx="320.5" cy="555.2" r="2"/><circle cx="322.2" cy="541.4" r="2"/><circle cx="323.9" cy="512.4" r="2"/><circle cx="325.6" cy="513.5" r="2"/><circle cx="327.3" cy="520.5" r="2"/><circle cx="329.9" cy="538.6" r="2"/><circle cx="332.5" cy="515.6" r="2"/><circle cx="335.1" cy="541.7" r="2"/><circle cx="337.7" cy="529.3" r="2"/><circle cx="340.3" cy="549.0" r="2"/><circle cx="342.9" cy="520.0" r="2"/><circle cx="345.5" cy="512.5" r="2"/><circle cx="348.1" cy="550.0" r="2"/><circle cx="350.7" cy="538.6" r="2"/><circle cx="353.3" cy="529.8" r="2"/><circle cx="356.9" cy="516.1" r="2"/><circle cx="360.5" cy="503.1" r="2"/><circle cx="364.1" cy="519.6" r="2"/><circle cx="367.7" cy="512.5" r="2"/><circle cx="371.3" cy="519.3" r="2"/><circle cx="374.9" cy="511.9" r="2"/><circle cx="378.5" cy="519.1" r="2"/><circle cx="382.1" cy="521.3" r="2"/><circle cx="385.7" cy="521.0" r="2"/><circle cx="389.3" cy="505.8" r="2"/><circle cx="392.9" cy="516.2" r="2"/><circle cx="396.5" cy="510.7" r="2"/><circle cx="400.1" cy="515.0" r="2"/><circle cx="404.3" cy="504.6" r="2"/><circle cx="408.5" cy="515.5" r="2"/><circle cx="412.7" cy="503.4" r="2"/><circle cx="416.9" cy="512.1" r="2"/><circle cx="421.1" cy="504.8" r="2"/><circle cx="425.3" cy="503.6" r="2"/><circle cx="429.5" cy="501.3" r="2"/><circle cx="433.7" cy="506.6" r="2"/><circle cx="437.9" cy="502.7" r="2"/><circle cx="442.1" cy="507.3" r="2"/><circle cx="446.3" cy="497.1" r="2"/><circle cx="450.5" cy="504.8" r="2"/><circle cx="454.7" cy="491.0" r="2"/><circle cx="458.9" cy="492.8" r="2"/><circle cx="463.1" cy="496.5" r="2"/><circle cx="467.3" cy="504.5" r="2"/><circle cx="471.5" cy="514.1" r="2"/><circle cx="475.7" cy="522.5" r="2"/><circle cx="479.9" cy="487.8" r="2"/><circle cx="484.1" cy="495.3" r="2"/><circle cx="488.3" cy="494.3" r="2"/><circle cx="492.5" cy="498.5" r="2"/><circle cx="496.7" cy="499.1" r="2"/><circle cx="500.9" cy="500.4" r="2"/><circle cx="505.1" cy="497.8" r="2"/><circle cx="509.3" cy="496.2" r="2"/><circle cx="513.5" cy="496.5" r="2"/><circle cx="517.7" cy="497.8" r="2"/><circle cx="521.9" cy="495.6" r="2"/><circle cx="526.1" cy="498.7" r="2"/><circle cx="530.3" cy="496.4" r="2"/><circle cx="534.5" cy="495.4" r="2"/><circle cx="538.7" cy="494.1" r="2"/><circle cx="542.9" cy="494.8" r="2"/><circle cx="547.1" cy="491.9" r="2"/><circle cx="551.3" cy="495.4" r="2"/><circle cx="555.5" cy="492.0" r="2"/><circle cx="559.7" cy="494.3" r="2"/><circle cx="563.9" cy="493.6" r="2"/><circle cx="568.1" cy="494.5" r="2"/><circle cx="572.3" cy="493.4" r="2"/><circle cx="576.5" cy="496.0" r="2"/><circle cx="580.7" cy="493.1" r="2"/><circle cx="584.9" cy="495.9" r="2"/><circle cx="589.1" cy="492.8" r="2"/><circle cx="593.3" cy="494.8" r="2"/><circle cx="597.5" cy="492.1" r="2"/><circle cx="601.7" cy="496.2" r="2"/><circle cx="605.9" cy="493.0" r="2"/><circle cx="610.1" cy="495.4" r="2"/><circle cx="614.3" cy="490.9" r="2"/><circle cx="618.5" cy="484.5" r="2"/><circle cx="622.7" cy="474.2" r="2"/><circle cx="626.9" cy="486.5" r="2"/><circle cx="631.1" cy="480.4" r="2"/><circle cx="635.3" cy="476.3" r="2"/><circle cx="639.5" cy="483.5" r="2"/><circle cx="643.7" cy="494.0" r="2"/><circle cx="647.9" cy="498.9" r="2"/><circle cx="652.1" cy="506.6" r="2"/><circle cx="656.3" cy="494.4" r="2"/><circle cx="660.5" cy="480.9" r="2"/><circle cx="664.7" cy="483.3" r="2"/><circle cx="668.9" cy="490.5" r="2"/><circle cx="673.1" cy="496.4" r="2"/><circle cx="677.3" cy="500.3" r="2"/><circle cx="681.5" cy="498.2" r="2"/><circle cx="685.7" cy="497.8" r="2"/><circle cx="689.9" cy="496.6" r="2"/><circle cx="694.1" cy="494.5" r="2"/><circle cx="698.3" cy="494.4" r="2"/><circle cx="702.5" cy="494.6" r="2"/><circle cx="706.7" cy="492.5" r="2"/><circle cx="710.9" cy="494.5" r="2"/><circle cx="715.1" cy="492.7" r="2"/><circle cx="719.3" cy="494.0" r="2"/><circle cx="723.5" cy="491.6" r="2"/><circle cx="727.7" cy="494.2" r="2"/><circle cx="731.9" cy="491.5" r="2"/><circle cx="736.1" cy="490.6" r="2"/><circle cx="740.3" cy="491.7" r="2"/><circle cx="744.5" cy="492.9" r="2"/><circle cx="748.7" cy="493.9" r="2"/><circle cx="752.9" cy="490.6" r="2"/><circle cx="757.1" cy="482.2" r="2"/><circle cx="761.3" cy="473.8" r="2"/><circle cx="765.5" cy="485.7" r="2"/><circle cx="769.7" cy="492.9" r="2"/><circle cx="773.9" cy="493.1" r="2"/><circle cx="778.1" cy="484.9" r="2"/><circle cx="782.3" cy="484.1" r="2"/><circle cx="786.5" cy="490.8" r="2"/><circle cx="790.7" cy="494.0" r="2"/><circle cx="794.9" cy="500.8" r="2"/><circle cx="799.1" cy="500.5" r="2"/><circle cx="803.3" cy="501.6" r="2"/><circle cx="807.5" cy="495.2" r="2"/><circle cx="811.7" cy="496.2" r="2"/><circle cx="815.9" cy="494.0" r="2"/><circle cx="820.1" cy="495.5" r="2"/><circle cx="824.3" cy="492.1" r="2"/><circle cx="828.5" cy="493.7" r="2"/><circle cx="832.7" cy="491.3" r="2"/><circle cx="836.9" cy="493.4" r="2"/><circle cx="841.1" cy="491.8" r="2"/><circle cx="845.3" cy="495.0" r="2"/><circle cx="849.5" cy="490.7" r="2"/><circle cx="853.7" cy="493.8" r="2"/><circle cx="857.9" cy="492.9" r="2"/><circle cx="862.1" cy="495.6" r="2"/><circle cx="866.3" cy="491.2" r="2"/><circle cx="870.5" cy="492.9" r="2"/><circle cx="874.7" cy="482.6" r="2"/><circle cx="878.9" cy="477.0" r="2"/><circle cx="883.1" cy="479.7" r="2"/><circle cx="887.3" cy="490.4" r="2"/><circle cx="891.5" cy="495.3" r="2"/><circle cx="895.7" cy="485.6" r="2"/><circle cx="899.9" cy="482.1" r="2"/><circle cx="904.1" cy="492.5" r="2"/><circle cx="908.3" cy="496.1" r="2"/><circle cx="912.5" cy="503.0" r="2"/><circle cx="916.7" cy="502.3" r="2"/><circle cx="920.9" cy="502.3" r="2"/><circle cx="925.1" cy="494.6" r="2"/><circle cx="929.3" cy="490.8" r="2"/><circle cx="933.5" cy="482.9" r="2"/><circle cx="937.7" cy="477.8" r="2"/><circle cx="940.0" cy="490.0" r="2"/><circle cx="942.4" cy="494.8" r="2"/><circle cx="945.6" cy="509.0" r="2"/><circle cx="949.7" cy="511.0" r="2"/><circle cx="953.7" cy="513.0" r="2"/><circle cx="957.0" cy="517.0" r="2"/><circle cx="960.0" cy="519.8" r="2"/><circle cx="964.0" cy="512.0" r="2"/><circle cx="968.0" cy="506.0" r="2"/><circle cx="970.5" cy="522.0" r="2"/><circle cx="973.9" cy="533.0" r="2"/><circle cx="977.9" cy="494.8" r="2"/><circle cx="982.0" cy="544.8" r="2"/><circle cx="985.2" cy="479.8" r="2"/><circle cx="989.2" cy="565.8" r="2"/></g>
</g>
<g stroke="#1cb2ee" fill="#1cb2ee">
<polyline shape-rendering="crispEdges" fill="none" stroke-width="1" points="101.6,505.5 105.8,501.7 110.0,510.5 114.2,511.5 118.4,502.7 122.6,508.5 126.8,501.6 131.0,507.6 135.2,502.1 139.4,501.6 143.6,504.2 147.8,511.1 152.0,503.4 156.2,515.6 160.4,505.4 164.6,510.2 168.8,503.9 173.0,511.5 177.2,500.5 181.4,511.2 185.6,506.1 189.8,509.3 194.0,501.6 198.2,504.6 202.4,505.3 206.6,504.7 209.2,487.6 211.8,484.0 214.4,460.8 217.0,460.0 219.6,446.0 222.2,443.2 223.6,437.8 225.1,447.6 226.5,440.9 228.0,457.1 229.4,437.2 230.9,458.4 232.3,436.7 233.8,454.1 235.2,453.2 236.7,460.0 238.1,439.6 239.6,433.7 241.0,446.7 242.5,456.8 243.9,452.7 245.4,457.8 246.8,446.7 248.3,463.1 249.7,450.2 251.2,476.3 252.6,461.6 254.1,477.4 255.5,459.9 257.0,477.8 258.4,462.1 259.9,478.4 261.3,471.2 262.8,499.9 264.2,485.7 265.7,512.1 267.1,469.2 268.6,520.8 270.0,538.0 271.5,524.0 272.9,516.2 274.4,509.8 275.8,524.5 277.3,512.6 278.7,487.2 280.2,516.3 281.6,498.6 283.1,547.5 284.5,558.4 286.0,617.4 287.0,641.0 288.9,607.2 290.3,575.0 291.8,593.4 293.2,571.6 294.7,585.3 296.1,566.7 297.6,574.3 299.0,566.8 300.5,579.4 302.2,581.1 303.9,575.3 305.6,563.2 307.3,576.2 309.0,572.8 310.7,564.8 312.4,550.4 314.1,566.5 315.8,547.0 317.5,565.8 319.2,535.8 320.9,550.5 322.6,521.3 324.3,476.0 326.0,501.3 327.7,535.0 330.3,513.4 332.9,534.0 335.5,520.1 338.1,525.1 340.7,513.1 343.3,532.0 345.9,499.3 348.5,527.9 351.1,494.9 353.7,504.0 357.3,506.6 360.9,514.5 364.5,501.5 368.1,510.3 371.7,499.5 375.3,514.7 378.9,510.6 382.5,511.2 386.1,510.9 389.7,508.9 393.3,499.3 396.9,508.9 400.5,499.9 404.7,505.4 408.9,498.1 413.1,508.6 417.3,497.1 421.5,507.5 425.7,498.4 429.9,505.8 434.1,497.0 438.3,500.3 442.5,492.8 446.7,502.9 450.9,490.1 455.1,487.8 459.3,482.6 463.5,490.7 467.7,493.8 471.9,520.1 476.1,506.3 480.3,488.4 484.5,490.8 488.7,492.2 492.9,497.4 497.1,497.7 501.3,493.8 505.5,496.1 509.7,496.0 513.9,495.4 518.1,493.8 522.3,495.8 526.5,492.2 530.7,492.9 534.9,491.5 539.1,492.2 543.3,490.0 547.5,492.3 551.7,488.8 555.9,491.6 560.1,490.4 564.3,493.2 568.5,487.8 572.7,491.3 576.9,489.5 581.1,492.0 585.3,491.9 589.5,493.4 593.7,489.2 597.9,491.5 602.1,488.9 606.3,489.6 610.5,489.3 614.7,490.1 618.9,478.3 623.1,474.3 627.3,482.0 631.5,478.9 635.7,471.3 639.9,483.4 644.1,488.6 648.3,496.6 652.5,499.7 656.7,491.9 660.9,474.9 665.1,481.6 669.3,486.9 673.5,494.1 677.7,495.4 681.9,497.8 686.1,494.6 690.3,495.1 694.5,490.6 698.7,491.1 702.9,489.1 707.1,490.4 711.3,487.4 715.5,490.3 719.7,488.4 723.9,491.1 728.1,487.6 732.3,490.8 736.5,491.4 740.7,490.1 744.9,488.6 749.1,490.0 753.3,483.8 757.5,478.4 761.7,469.1 765.9,486.0 770.1,488.2 774.3,490.9 778.5,478.5 782.7,482.3 786.9,484.6 791.1,493.5 795.3,496.6 799.5,501.1 803.7,494.1 807.9,497.6 812.1,493.6 816.3,493.8 820.5,489.3 824.7,490.9 828.9,489.1 833.1,491.6 837.3,489.6 841.5,491.9 845.7,489.0 849.9,489.2 854.1,491.5 858.3,490.2 862.5,489.4 866.7,490.9 870.9,487.4 875.1,482.5 879.3,472.7 883.5,480.7 887.7,487.3 891.9,490.5 896.1,478.4 900.3,483.6 904.5,488.4 908.7,497.0 912.9,496.9 917.1,501.8 921.3,494.5 925.5,493.3 929.7,485.8 933.9,481.1 938.1,473.2 940.8,481.0 944.0,490.0 947.0,504.5 950.5,507.7 954.5,513.4 957.0,520.6 961.0,508.5 963.9,531.5 967.7,487.6 972.0,523.0 975.5,507.7 979.0,503.0 982.7,523.9 986.3,483.0 990.3,553.7"/>
<g stroke="none"><circle cx="101.6" cy="505.5" r="2"/><circle cx="105.8" cy="501.7" r="2"/><circle cx="110.0" cy="510.5" r="2"/><circle cx="114.2" cy="511.5" r="2"/><circle cx="118.4" cy="502.7" r="2"/><circle cx="122.6" cy="508.5" r="2"/><circle cx="126.8" cy="501.6" r="2"/><circle cx="131.0" cy="507.6" r="2"/><circle cx="135.2" cy="502.1" r="2"/><circle cx="139.4" cy="501.6" r="2"/><circle cx="143.6" cy="504.2" r="2"/><circle cx="147.8" cy="511.1" r="2"/><circle cx="152.0" cy="503.4" r="2"/><circle cx="156.2" cy="515.6" r="2"/><circle cx="160.4" cy="505.4" r="2"/><circle cx="164.6" cy="510.2" r="2"/><circle cx="168.8" cy="503.9" r="2"/><circle cx="173.0" cy="511.5" r="2"/><circle cx="177.2" cy="500.5" r="2"/><circle cx="181.4" cy="511.2" r="2"/><circle cx="185.6" cy="506.1" r="2"/><circle cx="189.8" cy="509.3" r="2"/><circle cx="194.0" cy="501.6" r="2"/><circle cx="198.2" cy="504.6" r="2"/><circle cx="202.4" cy="505.3" r="2"/><circle cx="206.6" cy="504.7" r="2"/><circle cx="209.2" cy="487.6" r="2"/><circle cx="211.8" cy="484.0" r="2"/><circle cx="214.4" cy="460.8" r="2"/><circle cx="217.0" cy="460.0" r="2"/><circle cx="219.6" cy="446.0" r="2"/><circle cx="222.2" cy="443.2" r="2"/><circle cx="223.6" cy="437.8" r="2"/><circle cx="225.1" cy="447.6" r="2"/><circle cx="226.5" cy="440.9" r="2"/><circle cx="228.0" cy="457.1" r="2"/><circle cx="229.4" cy="437.2" r="2"/><circle cx="230.9" cy="458.4" r="2"/><circle cx="232.3" cy="436.7" r="2"/><circle cx="233.8" cy="454.1" r="2"/><circle cx="235.2" cy="453.2" r="2"/><circle cx="236.7" cy="460.0" r="2"/><circle cx="238.1" cy="439.6" r="2"/><circle cx="239.6" cy="433.7" r="2"/><circle cx="241.0" cy="446.7" r="2"/><circle cx="242.5" cy="456.8" r="2"/><circle cx="243.9" cy="452.7" r="2"/><circle cx="245.4" cy="457.8" r="2"/><circle cx="246.8" cy="446.7" r="2"/><circle cx="248.3" cy="463.1" r="2"/><circle cx="249.7" cy="450.2" r="2"/><circle cx="251.2" cy="476.3" r="2"/><circle cx="252.6" cy="461.6" r="2"/><circle cx="254.1" cy="477.4" r="2"/><circle cx="255.5" cy="459.9" r="2"/><circle cx="257.0" cy="477.8" r="2"/><circle cx="258.4" cy="462.1" r="2"/><circle cx="259.9" cy="478.4" r="2"/><circle cx="261.3" cy="471.2" r="2"/><circle cx="262.8" cy="499.9" r="2"/><circle cx="264.2" cy="485.7" r="2"/><circle cx="265.7" cy="512.1" r="2"/><circle cx="267.1" cy="469.2" r="2"/><circle cx="268.6" cy="520.8" r="2"/><circle cx="270.0" cy="538.0" r="2"/><circle cx="271.5" cy="524.0" r="2"/><circle cx="272.9" cy="516.2" r="2"/><circle cx="274.4" cy="509.8" r="2"/><circle cx="275.8" cy="524.5" r="2"/><circle cx="277.3" cy="512.6" r="2"/><circle cx="278.7" cy="487.2" r="2"/><circle cx="280.2" cy="516.3" r="2"/><circle cx="281.6" cy="498.6" r="2"/><circle cx="283.1" cy="547.5" r="2"/><circle cx="284.5" cy="558.4" r="2"/><circle cx="286.0" cy="617.4" r="2"/><circle cx="287.0" cy="641.0" r="2"/><circle cx="288.9" cy="607.2" r="2"/><circle cx="290.3" cy="575.0" r="2"/><circle cx="291.8" cy="593.4" r="2"/><circle cx="293.2" cy="571.6" r="2"/><circle cx="294.7" cy="585.3" r="2"/><circle cx="296.1" cy="566.7" r="2"/><circle cx="297.6" cy="574.3" r="2"/><circle cx="299.0" cy="566.8" r="2"/><circle cx="300.5" cy="579.4" r="2"/><circle cx="302.2" cy="581.1" r="2"/><circle cx="303.9" cy="575.3" r="2"/><circle cx="305.6" cy="563.2" r="2"/><circle cx="307.3" cy="576.2" r="2"/><circle cx="309.0" cy="572.8" r="2"/><circle cx="310.7" cy="564.8" r="2"/><circle cx="312.4" cy="550.4" r="2"/><circle cx="314.1" cy="566.5" r="2"/><circle cx="315.8" cy="547.0" r="2"/><circle cx="317.5" cy="565.8" r="2"/><circle cx="319.2" cy="535.8" r="2"/><circle cx="320.9" cy="550.5" r="2"/><circle cx="322.6" cy="521.3" r="2"/><circle cx="324.3" cy="476.0" r="2"/><circle cx="326.0" cy="501.3" r="2"/><circle cx="327.7" cy="535.0" r="2"/><circle cx="330.3" cy="513.4" r="2"/><circle cx="332.9" cy="534.0" r="2"/><circle cx="335.5" cy="520.1" r="2"/><circle cx="338.1" cy="525.1" r="2"/><circle cx="340.7" cy="513.1" r="2"/><circle cx="343.3" cy="532.0" r="2"/><circle cx="345.9" cy="499.3" r="2"/><circle cx="348.5" cy="527.9" r="2"/><circle cx="351.1" cy="494.9" r="2"/><circle cx="353.7" cy="504.0" r="2"/><circle cx="357.3" cy="506.6" r="2"/><circle cx="360.9" cy="514.5" r="2"/><circle cx="364.5" cy="501.5" r="2"/><circle cx="368.1" cy="510.3" r="2"/><circle cx="371.7" cy="499.5" r="2"/><circle cx="375.3" cy="514.7" r="2"/><circle cx="378.9" cy="510.6" r="2"/><circle cx="382.5" cy="511.2" r="2"/><circle cx="386.1" cy="510.9" r="2"/><circle cx="389.7" cy="508.9" r="2"/><circle cx="393.3" cy="499.3" r="2"/><circle cx="396.9" cy="508.9" r="2"/><circle cx="400.5" cy="499.9" r="2"/><circle cx="404.7" cy="505.4" r="2"/><circle cx="408.9" cy="498.1" r="2"/><circle cx="413.1" cy="508.6" r="2"/><circle cx="417.3" cy="497.1" r="2"/><circle cx="421.5" cy="507.5" r="2"/><circle cx="425.7" cy="498.4" r="2"/><circle cx="429.9" cy="505.8" r="2"/><circle cx="434.1" cy="497.0" r="2"/><circle cx="438.3" cy="500.3" r="2"/><circle cx="442.5" cy="492.8" r="2"/><circle cx="446.7" cy="502.9" r="2"/><circle cx="450.9" cy="490.1" r="2"/><circle cx="455.1" cy="487.8" r="2"/><circle cx="459.3" cy="482.6" r="2"/><circle cx="463.5" cy="490.7" r="2"/><circle cx="467.7" cy="493.8" r="2"/><circle cx="471.9" cy="520.1" r="2"/><circle cx="476.1" cy="506.3" r="2"/><circle cx="480.3" cy="488.4" r="2"/><circle cx="484.5" cy="490.8" r="2"/><circle cx="488.7" cy="492.2" r="2"/><circle cx="492.9" cy="497.4" r="2"/><circle cx="497.1" cy="497.7" r="2"/><circle cx="501.3" cy="493.8" r="2"/><circle cx="505.5" cy="496.1" r="2"/><circle cx="509.7" cy="496.0" r="2"/><circle cx="513.9" cy="495.4" r="2"/><circle cx="518.1" cy="493.8" r="2"/><circle cx="522.3" cy="495.8" r="2"/><circle cx="526.5" cy="492.2" r="2"/><circle cx="530.7" cy="492.9" r="2"/><circle cx="534.9" cy="491.5" r="2"/><circle cx="539.1" cy="492.2" r="2"/><circle cx="543.3" cy="490.0" r="2"/><circle cx="547.5" cy="492.3" r="2"/><circle cx="551.7" cy="488.8" r="2"/><circle cx="555.9" cy="491.6" r="2"/><circle cx="560.1" cy="490.4" r="2"/><circle cx="564.3" cy="493.2" r="2"/><circle cx="568.5" cy="487.8" r="2"/><circle cx="572.7" cy="491.3" r="2"/><circle cx="576.9" cy="489.5" r="2"/><circle cx="581.1" cy="492.0" r="2"/><circle cx="585.3" cy="491.9" r="2"/><circle cx="589.5" cy="493.4" r="2"/><circle cx="593.7" cy="489.2" r="2"/><circle cx="597.9" cy="491.5" r="2"/><circle cx="602.1" cy="488.9" r="2"/><circle cx="606.3" cy="489.6" r="2"/><circle cx="610.5" cy="489.3" r="2"/><circle cx="614.7" cy="490.1" r="2"/><circle cx="618.9" cy="478.3" r="2"/><circle cx="623.1" cy="474.3" r="2"/><circle cx="627.3" cy="482.0" r="2"/><circle cx="631.5" cy="478.9" r="2"/><circle cx="635.7" cy="471.3" r="2"/><circle cx="639.9" cy="483.4" r="2"/><circle cx="644.1" cy="488.6" r="2"/><circle cx="648.3" cy="496.6" r="2"/><circle cx="652.5" cy="499.7" r="2"/><circle cx="656.7" cy="491.9" r="2"/><circle cx="660.9" cy="474.9" r="2"/><circle cx="665.1" cy="481.6" r="2"/><circle cx="669.3" cy="486.9" r="2"/><circle cx="673.5" cy="494.1" r="2"/><circle cx="677.7" cy="495.4" r="2"/><circle cx="681.9" cy="497.8" r="2"/><circle cx="686.1" cy="494.6" r="2"/><circle cx="690.3" cy="495.1" r="2"/><circle cx="694.5" cy="490.6" r="2"/><circle cx="698.7" cy="491.1" r="2"/><circle cx="702.9" cy="489.1" r="2"/><circle cx="707.1" cy="490.4" r="2"/><circle cx="711.3" cy="487.4" r="2"/><circle cx="715.5" cy="490.3" r="2"/><circle cx="719.7" cy="488.4" r="2"/><circle cx="723.9" cy="491.1" r="2"/><circle cx="728.1" cy="487.6" r="2"/><circle cx="732.3" cy="490.8" r="2"/><circle cx="736.5" cy="491.4" r="2"/><circle cx="740.7" cy="490.1" r="2"/><circle cx="744.9" cy="488.6" r="2"/><circle cx="749.1" cy="490.0" r="2"/><circle cx="753.3" cy="483.8" r="2"/><circle cx="757.5" cy="478.4" r="2"/><circle cx="761.7" cy="469.1" r="2"/><circle cx="765.9" cy="486.0" r="2"/><circle cx="770.1" cy="488.2" r="2"/><circle cx="774.3" cy="490.9" r="2"/><circle cx="778.5" cy="478.5" r="2"/><circle cx="782.7" cy="482.3" r="2"/><circle cx="786.9" cy="484.6" r="2"/><circle cx="791.1" cy="493.5" r="2"/><circle cx="795.3" cy="496.6" r="2"/><circle cx="799.5" cy="501.1" r="2"/><circle cx="803.7" cy="494.1" r="2"/><circle cx="807.9" cy="497.6" r="2"/><circle cx="812.1" cy="493.6" r="2"/><circle cx="816.3" cy="493.8" r="2"/><circle cx="820.5" cy="489.3" r="2"/><circle cx="824.7" cy="490.9" r="2"/><circle cx="828.9" cy="489.1" r="2"/><circle cx="833.1" cy="491.6" r="2"/><circle cx="837.3" cy="489.6" r="2"/><circle cx="841.5" cy="491.9" r="2"/><circle cx="845.7" cy="489.0" r="2"/><circle cx="849.9" cy="489.2" r="2"/><circle cx="854.1" cy="491.5" r="2"/><circle cx="858.3" cy="490.2" r="2"/><circle cx="862.5" cy="489.4" r="2"/><circle cx="866.7" cy="490.9" r="2"/><circle cx="870.9" cy="487.4" r="2"/><circle cx="875.1" cy="482.5" r="2"/><circle cx="879.3" cy="472.7" r="2"/><circle cx="883.5" cy="480.7" r="2"/><circle cx="887.7" cy="487.3" r="2"/><circle cx="891.9" cy="490.5" r="2"/><circle cx="896.1" cy="478.4" r="2"/><circle cx="900.3" cy="483.6" r="2"/><circle cx="904.5" cy="488.4" r="2"/><circle cx="908.7" cy="497.0" r="2"/><circle cx="912.9" cy="496.9" r="2"/><circle cx="917.1" cy="501.8" r="2"/><circle cx="921.3" cy="494.5" r="2"/><circle cx="925.5" cy="493.3" r="2"/><circle cx="929.7" cy="485.8" r="2"/><circle cx="933.9" cy="481.1" r="2"/><circle cx="938.1" cy="473.2" r="2"/><circle cx="940.8" cy="481.0" r="2"/><circle cx="944.0" cy="490.0" r="2"/><circle cx="947.0" cy="504.5" r="2"/><circle cx="950.5" cy="507.7" r="2"/><circle cx="954.5" cy="513.4" r="2"/><circle cx="957.0" cy="520.6" r="2"/><circle cx="961.0" cy="508.5" r="2"/><circle cx="963.9" cy="531.5" r="2"/><circle cx="967.7" cy="487.6" r="2"/><circle cx="972.0" cy="523.0" r="2"/><circle cx="975.5" cy="507.7" r="2"/><circle cx="979.0" cy="503.0" r="2"/><circle cx="982.7" cy="523.9" r="2"/><circle cx="986.3" cy="483.0" r="2"/><circle cx="990.3" cy="553.7" r="2"/></g>
<g opacity="0.45">
<polyline fill="none" stroke-width="1" points="990.3,553.7 994.8,544.8"/>
<g stroke="none"><circle cx="994.8" cy="544.8" r="2"/></g>
</g>
</g>
</svg>
<div class="abs" style="left:94px;top:160px;width:909px;height:10px;background:#fff"></div>
<div class="abs" style="left:97px;top:170px;width:906px;height:1px;background:#e6e4dc"></div>
<div class="abs" style="left:93px;top:171px;width:1px;height:511px;background:#000"></div>
<svg class="abs" style="left:84.300px;top:154.200px" width="17" height="17"><circle cx="8.5" cy="8.5" r="7" fill="#08e0ee" stroke="#000" stroke-width="1.3"/><text x="8.5" y="12.6" text-anchor="middle" font-family="Liberation Sans, sans-serif" font-weight="bold" font-size="11" fill="#000">A</text></svg>
<div class="abs" style="left:-2px;top:171px;width:93px;height:35px;box-sizing:border-box;border:2px solid #000;background:#e1fcd9"></div>
<div class="lbl" style="left:1px;top:172.5px;font-size:14.67px;line-height:16px">Время:</div>
<div class="lbl" style="left:0px;top:189px;font-size:14.67px;line-height:16px">0 s</div>
<div class="abs" style="left:0;top:628px;width:93px;height:54px;background:#ece9e2"></div>
<div class="abs" style="left:22px;top:629px;width:70px;height:46px;background:#dffbd8"></div>
<div class="btn" style="left:-2px;top:630px;width:22px;height:20px"></div>
<svg class="abs" style="left:1px;top:632px" width="16" height="16"><circle cx="8" cy="8" r="6.5" fill="none" stroke="#000" stroke-width="1.3"/><path d="M4 8h8M8 4v8" stroke="#000" stroke-width="2"/></svg>
<div class="btn" style="left:-2px;top:654px;width:22px;height:20px"></div>
<div class="lbl" style="left:2px;top:656px;font:bold 14px 'Liberation Sans', sans-serif;letter-spacing:-0.5px;transform:scaleX(0.74);transform-origin:0 0">1:1</div>
<div class="lbl" style="left:22.6px;top:632.5px;font:bold 13px 'DejaVu Sans', sans-serif;line-height:16px">↕</div>
<div class="lbl" style="left:30.5px;top:632.5px;font:bold 14px 'Liberation Sans', sans-serif;line-height:16px">:1:2.01</div>
<div class="lbl" style="left:22.5px;top:656.5px;font:bold 11.5px 'DejaVu Sans', sans-serif;line-height:16px">↔</div>
<div class="lbl" style="left:31.5px;top:656px;font:bold 14px 'Liberation Sans', sans-serif;line-height:16px">:1:1</div>
<div class="btn" style="left:-2px;top:677px;width:22px;height:12px"></div>
<div class="btn" style="left:22px;top:677px;width:22px;height:12px"></div>
<div class="btn" style="left:46px;top:677px;width:21px;height:12px"></div>
<div class="btn" style="left:70px;top:677px;width:22px;height:12px"></div>
<div class="abs" style="left:4px;top:681px;width:7px;height:1px;background:#000"></div>
<div class="abs" style="left:31px;top:681px;width:6px;height:1px;background:#000"></div>
<div class="abs" style="left:78px;top:681px;width:4px;height:1px;background:#000"></div>
<span class="t" style="left:22.099999999999998px;top:5.5px;font:bold 11.5px 'Liberation Sans', sans-serif;color:#fbf7ec;text-shadow:1px 1px 0 #3c5288;transform:scaleX(0.9499)">USB Oscilloscope</span>
<span class="t" style="left:119.4px;top:5.5px;font:bold 11.5px 'Liberation Sans', sans-serif;color:#fbf7ec;text-shadow:1px 1px 0 #3c5288;transform:scaleX(1.1042)">- E:\</span>
<span class="t" style="left:143.3px;top:5.5px;font:bold 11.5px 'Liberation Sans', sans-serif;color:#fbf7ec;text-shadow:1px 1px 0 #3c5288;transform:scaleX(1.0999)">На ноутбук\</span>
<span class="t" style="left:215.70000000000002px;top:5.5px;font:bold 11.5px 'Liberation Sans', sans-serif;color:#fbf7ec;text-shadow:1px 1px 0 #3c5288;transform:scaleX(1.0842)">Петро 33 07\</span>
<span class="t" style="left:290.9px;top:5.5px;font:bold 11.5px 'Liberation Sans', sans-serif;color:#fbf7ec;text-shadow:1px 1px 0 #3c5288;transform:scaleX(1.1164)">25 декабря 2018\</span>
<span class="t" style="left:396.4px;top:5.5px;font:bold 11.5px 'Liberation Sans', sans-serif;color:#fbf7ec;text-shadow:1px 1px 0 #3c5288;transform:scaleX(1.0606)">После\</span>
<span class="t" style="left:436.59999999999997px;top:5.5px;font:bold 11.5px 'Liberation Sans', sans-serif;color:#fbf7ec;text-shadow:1px 1px 0 #3c5288;transform:scaleX(1.0089)">CSS04.mwf</span>
<span class="t" style="left:1px;top:24px;font:11px 'Liberation Sans', sans-serif;color:#000;transform:scaleX(0.9243)">Файл</span>
<span class="t" style="left:39px;top:24px;font:11px 'Liberation Sans', sans-serif;color:#000;transform:scaleX(0.9811)">Управление</span>
<span class="t" style="left:111.7px;top:24px;font:11px 'Liberation Sans', sans-serif;color:#000;transform:scaleX(0.9715)">Операции</span>
<span class="t" style="left:173.7px;top:24px;font:11px 'Liberation Sans', sans-serif;color:#000;transform:scaleX(1.0187)">Закладки</span>
<span class="t" style="left:235px;top:24px;font:11px 'Liberation Sans', sans-serif;color:#000;transform:scaleX(0.9558)">Анализ</span>
<span class="t" style="left:282.5px;top:24px;font:11px 'Liberation Sans', sans-serif;color:#000;transform:scaleX(1.0219)">Отображать</span>
<span class="t" style="left:359px;top:24px;font:11px 'Liberation Sans', sans-serif;color:#000;transform:scaleX(1.0232)">Утилиты</span>
<span class="t" style="left:416px;top:24px;font:11px 'Liberation Sans', sans-serif;color:#000;transform:scaleX(0.9294)">Помощь</span>
<span class="t" style="left:5.7px;top:73.5px;font:11px 'Liberation Sans', sans-serif;color:#000;transform:scaleX(0.9021)">Отчёт</span>
<span class="t" style="left:47.5px;top:72.5px;font:11px 'Liberation Sans', sans-serif;color:#000;transform:scaleX(0.9835)">Эффективность</span>
<span class="t" style="left:141px;top:73.5px;font:11px 'Liberation Sans', sans-serif;color:#000;transform:scaleX(0.9869)">Опережение отн. ВМТ 2</span>
<span class="t" style="left:275px;top:73.5px;font:11px 'Liberation Sans', sans-serif;color:#000;transform:scaleX(0.9709)">Зубчатый диск (36-2, 360°) отн. ВМТ 1</span>
</body></html>
